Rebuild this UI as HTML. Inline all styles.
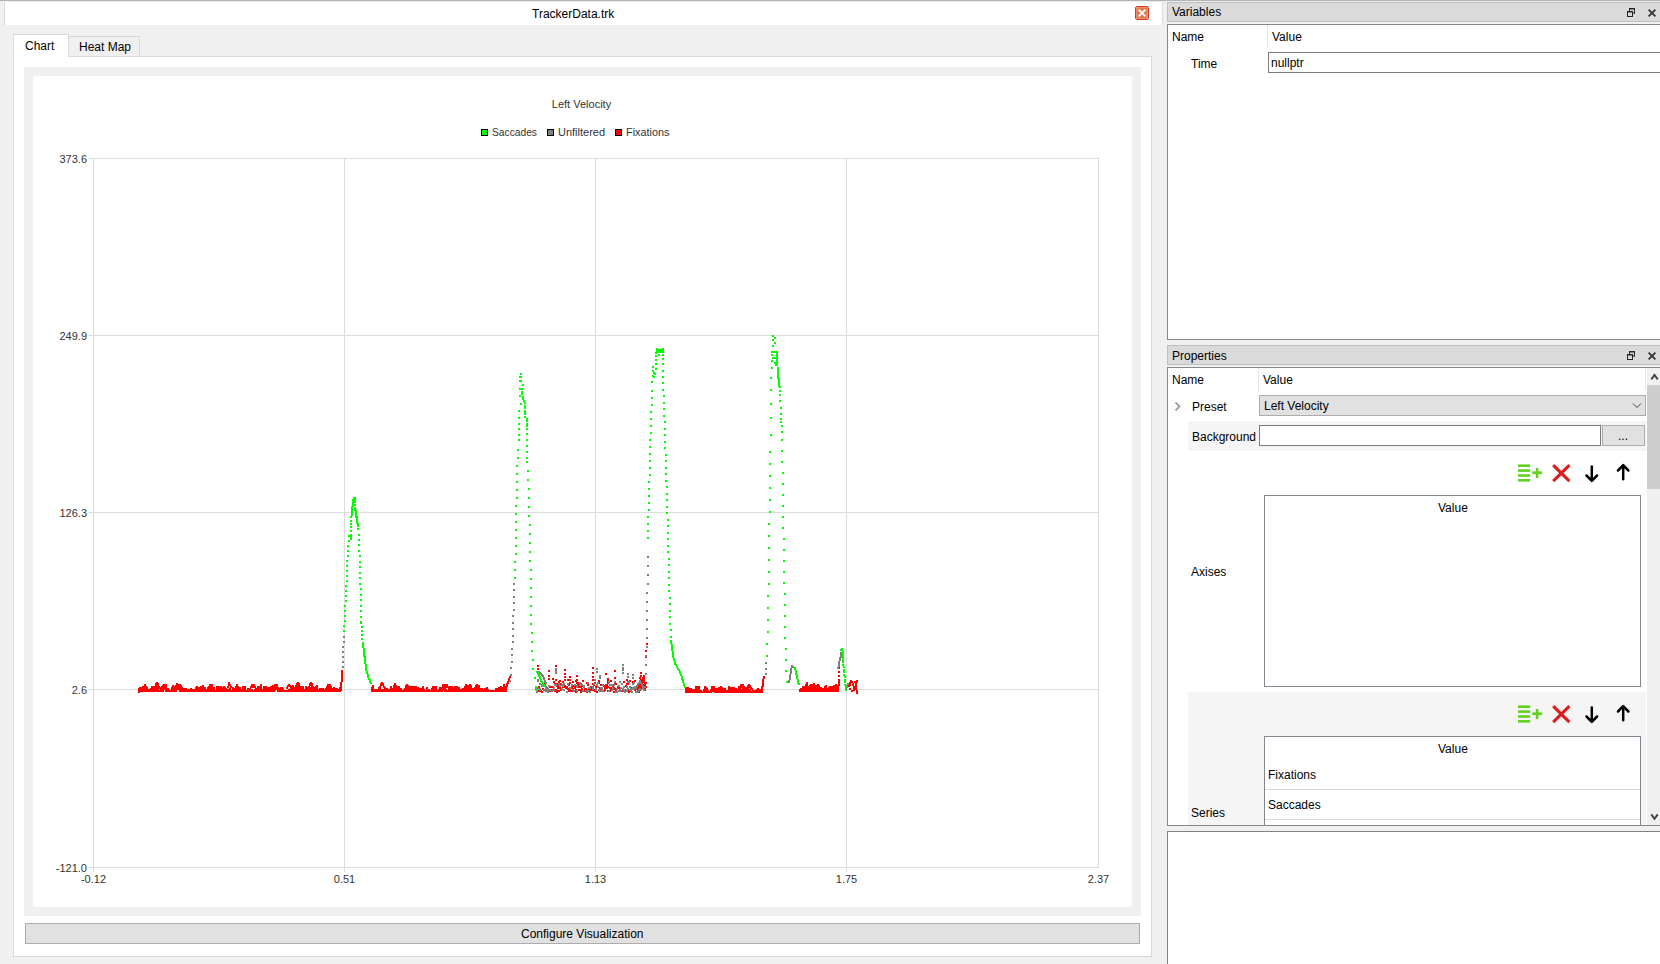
<!DOCTYPE html>
<html><head><meta charset="utf-8">
<style>
*{box-sizing:border-box;margin:0;padding:0}
html,body{width:1660px;height:964px;overflow:hidden;background:#f0f0f0;font-family:"Liberation Sans",sans-serif;font-size:12px;color:#000}
.a{position:absolute}
.t{position:absolute;white-space:nowrap;line-height:14px;font-size:12px}
.ct{position:absolute;white-space:nowrap;line-height:13px;font-size:11px;color:#333}
</style></head><body>
<!-- top line -->
<div class="a" style="left:0;top:0;width:1660px;height:1px;background:#b4b4b4"></div>
<div class="a" style="left:0;top:1px;width:1660px;height:1px;background:#ebebeb"></div>

<!-- left subwindow title bar -->
<div class="a" style="left:4px;top:2px;width:1159px;height:23px;background:#fff;border-left:1px solid #d9d9d9;border-right:1px solid #dcdcdc"></div>
<div class="t" style="left:532px;top:7px">TrackerData.trk</div>
<!-- close button -->
<svg class="a" style="left:1135px;top:6px" width="14" height="14" viewBox="0 0 14 14">
<path d="M1.5,0.5H12.5L13.5,1.5V12.5L12.5,13.5H1.5L0.5,12.5V1.5Z" fill="#e27a4c" stroke="#d8392a" stroke-width="1"/>
<rect x="1.5" y="1.5" width="11" height="11" fill="none" stroke="#eb9a78" stroke-width="0.8"/>
<path d="M4.3,4.3L9.7,9.7M9.7,4.3L4.3,9.7" stroke="#fff" stroke-width="1.9" stroke-linecap="square"/>
</svg>

<!-- tabs -->
<div class="a" style="left:68px;top:36px;width:72px;height:21px;background:#f0f0f0;border:1px solid #d9d9d9;border-bottom:none"></div>
<div class="t" style="left:79px;top:40px">Heat Map</div>
<!-- pane -->
<div class="a" style="left:13px;top:56px;width:1139px;height:901px;background:#fff;border:1px solid #d9d9d9"></div>
<div class="a" style="left:13px;top:34px;width:56px;height:23px;background:#fff;border:1px solid #d9d9d9;border-bottom:none"></div>
<div class="t" style="left:25px;top:39px">Chart</div>

<!-- chart frame -->
<div class="a" style="left:24px;top:67px;width:1117px;height:849px;background:#f0f0f0"></div>
<div class="a" style="left:33px;top:76px;width:1099px;height:831px;background:#fff;border-radius:3px"></div>
<svg class="a" style="left:0;top:0" width="1160" height="964" viewBox="0 0 1160 964" shape-rendering="crispEdges">
<rect x="89" y="158" width="1010" height="1" fill="#dcdcdc"/><rect x="89" y="335" width="1010" height="1" fill="#dcdcdc"/><rect x="89" y="512" width="1010" height="1" fill="#dcdcdc"/><rect x="89" y="689" width="1010" height="1" fill="#dcdcdc"/><rect x="89" y="867" width="1010" height="1" fill="#dcdcdc"/><rect x="93" y="158" width="1" height="714" fill="#dcdcdc"/><rect x="344" y="158" width="1" height="714" fill="#dcdcdc"/><rect x="595" y="158" width="1" height="714" fill="#dcdcdc"/><rect x="846" y="158" width="1" height="714" fill="#dcdcdc"/><rect x="1098" y="158" width="1" height="710" fill="#dcdcdc"/>
<g font-family="Liberation Sans, sans-serif" font-size="11" fill="#333" shape-rendering="auto">
<text x="87" y="162.5" text-anchor="end">373.6</text><text x="87" y="339.5" text-anchor="end">249.9</text><text x="87" y="516.5" text-anchor="end">126.3</text><text x="87" y="693.5" text-anchor="end">2.6</text><text x="87" y="871.5" text-anchor="end">-121.0</text><text x="93.5" y="883" text-anchor="middle">-0.12</text><text x="344.5" y="883" text-anchor="middle">0.51</text><text x="595.5" y="883" text-anchor="middle">1.13</text><text x="846.5" y="883" text-anchor="middle">1.75</text><text x="1098.5" y="883" text-anchor="middle">2.37</text>
<text x="581.5" y="108" text-anchor="middle">Left Velocity</text>
<text x="492" y="136" textLength="45" lengthAdjust="spacingAndGlyphs">Saccades</text>
<text x="558" y="136" textLength="47" lengthAdjust="spacingAndGlyphs">Unfiltered</text>
<text x="626" y="136" textLength="43.5" lengthAdjust="spacingAndGlyphs">Fixations</text>
</g>
<rect x="481.5" y="129.5" width="6" height="6" fill="#00ff00" stroke="#000"/>
<rect x="547.5" y="129.5" width="6" height="6" fill="#808080" stroke="#000"/>
<rect x="615.5" y="129.5" width="6" height="6" fill="#ff0000" stroke="#000"/>
<path fill="#ff0000" d="M138 688h2v2h-2zM138 690h2v2h-2zM138 690h2v2h-2zM139 689h2v2h-2zM139 690h2v2h-2zM139 690h2v2h-2zM139 687h2v2h-2zM139 689h2v2h-2zM139 690h2v2h-2zM140 687h2v2h-2zM140 689h2v2h-2zM140 690h2v2h-2zM141 689h2v2h-2zM141 690h2v2h-2zM141 690h2v2h-2zM141 689h2v2h-2zM141 690h2v2h-2zM141 690h2v2h-2zM142 686h2v2h-2zM142 688h2v2h-2zM142 690h2v2h-2zM143 688h2v2h-2zM143 690h2v2h-2zM143 690h2v2h-2zM144 686h2v2h-2zM144 688h2v2h-2zM144 690h2v2h-2zM144 684h2v2h-2zM144 686h2v2h-2zM144 688h2v2h-2zM145 686h2v2h-2zM145 688h2v2h-2zM145 690h2v2h-2zM146 687h2v2h-2zM146 689h2v2h-2zM146 690h2v2h-2zM146 688h2v2h-2zM146 690h2v2h-2zM146 690h2v2h-2zM147 689h2v2h-2zM147 690h2v2h-2zM147 690h2v2h-2zM148 689h2v2h-2zM148 690h2v2h-2zM148 690h2v2h-2zM148 690h2v2h-2zM148 690h2v2h-2zM148 690h2v2h-2zM149 689h2v2h-2zM149 690h2v2h-2zM149 690h2v2h-2zM150 688h2v2h-2zM150 690h2v2h-2zM150 690h2v2h-2zM151 687h2v2h-2zM151 689h2v2h-2zM151 690h2v2h-2zM151 686h2v2h-2zM151 688h2v2h-2zM151 690h2v2h-2zM152 686h2v2h-2zM152 688h2v2h-2zM152 690h2v2h-2zM153 687h2v2h-2zM153 689h2v2h-2zM153 690h2v2h-2zM153 688h2v2h-2zM153 690h2v2h-2zM153 690h2v2h-2zM154 690h2v2h-2zM154 690h2v2h-2zM154 690h2v2h-2zM155 689h2v2h-2zM155 690h2v2h-2zM155 690h2v2h-2zM155 687h2v2h-2zM155 689h2v2h-2zM155 690h2v2h-2zM156 685h2v2h-2zM156 687h2v2h-2zM156 689h2v2h-2zM157 688h2v2h-2zM157 690h2v2h-2zM157 690h2v2h-2zM158 690h2v2h-2zM158 690h2v2h-2zM158 690h2v2h-2zM158 690h2v2h-2zM158 690h2v2h-2zM158 690h2v2h-2zM159 690h2v2h-2zM159 690h2v2h-2zM159 690h2v2h-2zM160 688h2v2h-2zM160 690h2v2h-2zM160 690h2v2h-2zM160 687h2v2h-2zM160 689h2v2h-2zM160 690h2v2h-2zM161 686h2v2h-2zM161 688h2v2h-2zM161 690h2v2h-2zM162 685h2v2h-2zM162 687h2v2h-2zM162 689h2v2h-2zM162 687h2v2h-2zM162 689h2v2h-2zM162 690h2v2h-2zM163 684h2v2h-2zM163 686h2v2h-2zM163 688h2v2h-2zM164 684h2v2h-2zM164 686h2v2h-2zM164 688h2v2h-2zM165 684h2v2h-2zM165 686h2v2h-2zM165 688h2v2h-2zM165 687h2v2h-2zM165 689h2v2h-2zM165 690h2v2h-2zM166 688h2v2h-2zM166 690h2v2h-2zM166 690h2v2h-2zM167 688h2v2h-2zM167 690h2v2h-2zM167 690h2v2h-2zM167 689h2v2h-2zM167 690h2v2h-2zM167 690h2v2h-2zM168 689h2v2h-2zM168 690h2v2h-2zM168 690h2v2h-2zM169 690h2v2h-2zM169 690h2v2h-2zM169 690h2v2h-2zM169 690h2v2h-2zM169 690h2v2h-2zM169 690h2v2h-2zM170 690h2v2h-2zM170 690h2v2h-2zM170 690h2v2h-2zM171 687h2v2h-2zM171 689h2v2h-2zM171 690h2v2h-2zM172 685h2v2h-2zM172 687h2v2h-2zM172 689h2v2h-2zM172 689h2v2h-2zM172 690h2v2h-2zM172 690h2v2h-2zM173 689h2v2h-2zM173 690h2v2h-2zM173 690h2v2h-2zM174 690h2v2h-2zM174 690h2v2h-2zM174 690h2v2h-2zM174 688h2v2h-2zM174 690h2v2h-2zM174 690h2v2h-2zM174 686h2v2h-2zM175 685h2v2h-2zM176 683h2v2h-2zM177 685h2v2h-2zM178 686h2v2h-2zM175 687h2v2h-2zM175 689h2v2h-2zM175 690h2v2h-2zM176 684h2v2h-2zM176 686h2v2h-2zM176 688h2v2h-2zM176 684h2v2h-2zM176 686h2v2h-2zM176 688h2v2h-2zM177 684h2v2h-2zM177 686h2v2h-2zM177 688h2v2h-2zM178 684h2v2h-2zM178 686h2v2h-2zM178 688h2v2h-2zM179 687h2v2h-2zM179 689h2v2h-2zM179 690h2v2h-2zM179 684h2v2h-2zM179 686h2v2h-2zM179 688h2v2h-2zM180 685h2v2h-2zM180 687h2v2h-2zM180 689h2v2h-2zM181 687h2v2h-2zM181 689h2v2h-2zM181 690h2v2h-2zM181 688h2v2h-2zM181 690h2v2h-2zM181 690h2v2h-2zM182 689h2v2h-2zM182 690h2v2h-2zM182 690h2v2h-2zM183 688h2v2h-2zM183 690h2v2h-2zM183 690h2v2h-2zM183 688h2v2h-2zM183 690h2v2h-2zM183 690h2v2h-2zM184 688h2v2h-2zM184 690h2v2h-2zM184 690h2v2h-2zM185 688h2v2h-2zM185 690h2v2h-2zM185 690h2v2h-2zM186 689h2v2h-2zM186 690h2v2h-2zM186 690h2v2h-2zM186 689h2v2h-2zM186 690h2v2h-2zM186 690h2v2h-2zM187 690h2v2h-2zM187 690h2v2h-2zM187 690h2v2h-2zM188 690h2v2h-2zM188 690h2v2h-2zM188 690h2v2h-2zM188 689h2v2h-2zM188 690h2v2h-2zM188 690h2v2h-2zM189 689h2v2h-2zM189 690h2v2h-2zM189 690h2v2h-2zM190 688h2v2h-2zM190 690h2v2h-2zM190 690h2v2h-2zM190 690h2v2h-2zM190 690h2v2h-2zM190 690h2v2h-2zM191 690h2v2h-2zM191 690h2v2h-2zM191 690h2v2h-2zM192 689h2v2h-2zM192 690h2v2h-2zM192 690h2v2h-2zM193 690h2v2h-2zM193 690h2v2h-2zM193 690h2v2h-2zM193 690h2v2h-2zM193 690h2v2h-2zM193 690h2v2h-2zM194 689h2v2h-2zM194 690h2v2h-2zM194 690h2v2h-2zM195 687h2v2h-2zM195 689h2v2h-2zM195 690h2v2h-2zM195 688h2v2h-2zM195 690h2v2h-2zM195 690h2v2h-2zM196 686h2v2h-2zM196 688h2v2h-2zM196 690h2v2h-2zM197 687h2v2h-2zM197 689h2v2h-2zM197 690h2v2h-2zM197 690h2v2h-2zM197 690h2v2h-2zM197 690h2v2h-2zM198 690h2v2h-2zM198 690h2v2h-2zM198 690h2v2h-2zM199 687h2v2h-2zM199 689h2v2h-2zM199 690h2v2h-2zM200 686h2v2h-2zM200 688h2v2h-2zM200 690h2v2h-2zM200 687h2v2h-2zM200 689h2v2h-2zM200 690h2v2h-2zM201 687h2v2h-2zM201 689h2v2h-2zM201 690h2v2h-2zM202 689h2v2h-2zM202 690h2v2h-2zM202 690h2v2h-2zM202 685h2v2h-2zM202 687h2v2h-2zM202 689h2v2h-2zM203 688h2v2h-2zM203 690h2v2h-2zM203 690h2v2h-2zM204 687h2v2h-2zM204 689h2v2h-2zM204 690h2v2h-2zM204 688h2v2h-2zM204 690h2v2h-2zM204 690h2v2h-2zM205 689h2v2h-2zM205 690h2v2h-2zM205 690h2v2h-2zM206 690h2v2h-2zM206 690h2v2h-2zM206 690h2v2h-2zM207 687h2v2h-2zM207 689h2v2h-2zM207 690h2v2h-2zM207 688h2v2h-2zM207 690h2v2h-2zM207 690h2v2h-2zM208 686h2v2h-2zM208 688h2v2h-2zM208 690h2v2h-2zM209 684h2v2h-2zM209 686h2v2h-2zM209 688h2v2h-2zM209 685h2v2h-2zM209 687h2v2h-2zM209 689h2v2h-2zM210 686h2v2h-2zM210 688h2v2h-2zM210 690h2v2h-2zM211 688h2v2h-2zM211 690h2v2h-2zM211 690h2v2h-2zM211 684h2v2h-2zM211 686h2v2h-2zM211 688h2v2h-2zM212 688h2v2h-2zM212 690h2v2h-2zM212 690h2v2h-2zM213 687h2v2h-2zM213 689h2v2h-2zM213 690h2v2h-2zM214 690h2v2h-2zM214 690h2v2h-2zM214 690h2v2h-2zM214 690h2v2h-2zM214 690h2v2h-2zM214 690h2v2h-2zM215 690h2v2h-2zM215 690h2v2h-2zM215 690h2v2h-2zM216 686h2v2h-2zM216 688h2v2h-2zM216 690h2v2h-2zM216 686h2v2h-2zM216 688h2v2h-2zM216 690h2v2h-2zM217 687h2v2h-2zM217 689h2v2h-2zM217 690h2v2h-2zM218 686h2v2h-2zM218 688h2v2h-2zM218 690h2v2h-2zM218 686h2v2h-2zM218 688h2v2h-2zM218 690h2v2h-2zM219 689h2v2h-2zM219 690h2v2h-2zM219 690h2v2h-2zM220 686h2v2h-2zM220 688h2v2h-2zM220 690h2v2h-2zM221 687h2v2h-2zM221 689h2v2h-2zM221 690h2v2h-2zM221 688h2v2h-2zM221 690h2v2h-2zM221 690h2v2h-2zM222 688h2v2h-2zM222 690h2v2h-2zM222 690h2v2h-2zM223 688h2v2h-2zM223 690h2v2h-2zM223 690h2v2h-2zM223 686h2v2h-2zM223 688h2v2h-2zM223 690h2v2h-2zM224 687h2v2h-2zM224 689h2v2h-2zM224 690h2v2h-2zM225 689h2v2h-2zM225 690h2v2h-2zM225 690h2v2h-2zM225 688h2v2h-2zM225 690h2v2h-2zM225 690h2v2h-2zM226 690h2v2h-2zM226 690h2v2h-2zM226 690h2v2h-2zM227 689h2v2h-2zM227 690h2v2h-2zM227 690h2v2h-2zM227 686h2v2h-2zM228 684h2v2h-2zM228 682h2v2h-2zM229 684h2v2h-2zM230 686h2v2h-2zM228 689h2v2h-2zM228 690h2v2h-2zM228 690h2v2h-2zM228 690h2v2h-2zM228 690h2v2h-2zM228 690h2v2h-2zM229 688h2v2h-2zM229 690h2v2h-2zM229 690h2v2h-2zM230 690h2v2h-2zM230 690h2v2h-2zM230 690h2v2h-2zM230 690h2v2h-2zM230 690h2v2h-2zM230 690h2v2h-2zM231 690h2v2h-2zM231 690h2v2h-2zM231 690h2v2h-2zM232 690h2v2h-2zM232 690h2v2h-2zM232 690h2v2h-2zM232 687h2v2h-2zM232 689h2v2h-2zM232 690h2v2h-2zM233 689h2v2h-2zM233 690h2v2h-2zM233 690h2v2h-2zM234 688h2v2h-2zM234 690h2v2h-2zM234 690h2v2h-2zM235 686h2v2h-2zM235 688h2v2h-2zM235 690h2v2h-2zM235 686h2v2h-2zM235 688h2v2h-2zM235 690h2v2h-2zM236 684h2v2h-2zM236 686h2v2h-2zM236 688h2v2h-2zM237 686h2v2h-2zM237 688h2v2h-2zM237 690h2v2h-2zM237 688h2v2h-2zM237 690h2v2h-2zM237 690h2v2h-2zM238 688h2v2h-2zM238 690h2v2h-2zM238 690h2v2h-2zM239 688h2v2h-2zM239 690h2v2h-2zM239 690h2v2h-2zM239 687h2v2h-2zM239 689h2v2h-2zM239 690h2v2h-2zM240 689h2v2h-2zM240 690h2v2h-2zM240 690h2v2h-2zM241 689h2v2h-2zM241 690h2v2h-2zM241 690h2v2h-2zM242 689h2v2h-2zM242 690h2v2h-2zM242 690h2v2h-2zM242 686h2v2h-2zM242 688h2v2h-2zM242 690h2v2h-2zM243 686h2v2h-2zM243 688h2v2h-2zM243 690h2v2h-2zM244 686h2v2h-2zM244 688h2v2h-2zM244 690h2v2h-2zM244 688h2v2h-2zM244 690h2v2h-2zM244 690h2v2h-2zM245 690h2v2h-2zM245 690h2v2h-2zM245 690h2v2h-2zM246 690h2v2h-2zM246 690h2v2h-2zM246 690h2v2h-2zM246 690h2v2h-2zM246 690h2v2h-2zM246 690h2v2h-2zM247 688h2v2h-2zM247 690h2v2h-2zM247 690h2v2h-2zM248 688h2v2h-2zM248 690h2v2h-2zM248 690h2v2h-2zM249 688h2v2h-2zM249 690h2v2h-2zM249 690h2v2h-2zM249 688h2v2h-2zM249 690h2v2h-2zM249 690h2v2h-2zM250 689h2v2h-2zM250 690h2v2h-2zM250 690h2v2h-2zM251 689h2v2h-2zM251 690h2v2h-2zM251 690h2v2h-2zM251 690h2v2h-2zM251 690h2v2h-2zM251 690h2v2h-2zM252 690h2v2h-2zM252 690h2v2h-2zM252 690h2v2h-2zM253 690h2v2h-2zM253 690h2v2h-2zM253 690h2v2h-2zM253 690h2v2h-2zM253 690h2v2h-2zM253 690h2v2h-2zM254 689h2v2h-2zM254 690h2v2h-2zM254 690h2v2h-2zM255 689h2v2h-2zM255 690h2v2h-2zM255 690h2v2h-2zM256 689h2v2h-2zM256 690h2v2h-2zM256 690h2v2h-2zM256 688h2v2h-2zM256 690h2v2h-2zM256 690h2v2h-2zM257 686h2v2h-2zM257 688h2v2h-2zM257 690h2v2h-2zM258 686h2v2h-2zM258 688h2v2h-2zM258 690h2v2h-2zM258 686h2v2h-2zM258 688h2v2h-2zM258 690h2v2h-2zM259 686h2v2h-2zM259 688h2v2h-2zM259 690h2v2h-2zM260 685h2v2h-2zM260 687h2v2h-2zM260 689h2v2h-2zM260 684h2v2h-2zM260 686h2v2h-2zM260 688h2v2h-2zM261 689h2v2h-2zM261 690h2v2h-2zM261 690h2v2h-2zM262 690h2v2h-2zM262 690h2v2h-2zM262 690h2v2h-2zM263 686h2v2h-2zM263 688h2v2h-2zM263 690h2v2h-2zM263 686h2v2h-2zM263 688h2v2h-2zM263 690h2v2h-2zM264 686h2v2h-2zM264 688h2v2h-2zM264 690h2v2h-2zM265 686h2v2h-2zM265 688h2v2h-2zM265 690h2v2h-2zM265 688h2v2h-2zM265 690h2v2h-2zM265 690h2v2h-2zM266 688h2v2h-2zM266 690h2v2h-2zM266 690h2v2h-2zM267 688h2v2h-2zM267 690h2v2h-2zM267 690h2v2h-2zM267 687h2v2h-2zM267 689h2v2h-2zM267 690h2v2h-2zM268 687h2v2h-2zM268 689h2v2h-2zM268 690h2v2h-2zM269 688h2v2h-2zM269 690h2v2h-2zM269 690h2v2h-2zM270 688h2v2h-2zM270 690h2v2h-2zM270 690h2v2h-2zM270 686h2v2h-2zM270 688h2v2h-2zM270 690h2v2h-2zM271 688h2v2h-2zM271 690h2v2h-2zM271 690h2v2h-2zM272 687h2v2h-2zM272 689h2v2h-2zM272 690h2v2h-2zM272 685h2v2h-2zM272 687h2v2h-2zM272 689h2v2h-2zM273 686h2v2h-2zM273 688h2v2h-2zM273 690h2v2h-2zM274 685h2v2h-2zM274 687h2v2h-2zM274 689h2v2h-2zM274 684h2v2h-2zM274 686h2v2h-2zM274 688h2v2h-2zM275 684h2v2h-2zM275 686h2v2h-2zM275 688h2v2h-2zM276 684h2v2h-2zM276 686h2v2h-2zM276 688h2v2h-2zM277 687h2v2h-2zM277 689h2v2h-2zM277 690h2v2h-2zM277 687h2v2h-2zM277 689h2v2h-2zM277 690h2v2h-2zM278 688h2v2h-2zM278 690h2v2h-2zM278 690h2v2h-2zM279 689h2v2h-2zM279 690h2v2h-2zM279 690h2v2h-2zM279 690h2v2h-2zM279 690h2v2h-2zM279 690h2v2h-2zM280 687h2v2h-2zM280 689h2v2h-2zM280 690h2v2h-2zM281 687h2v2h-2zM281 689h2v2h-2zM281 690h2v2h-2zM281 689h2v2h-2zM281 690h2v2h-2zM281 690h2v2h-2zM282 688h2v2h-2zM282 690h2v2h-2zM282 690h2v2h-2zM283 690h2v2h-2zM283 690h2v2h-2zM283 690h2v2h-2zM284 690h2v2h-2zM284 690h2v2h-2zM284 690h2v2h-2zM284 690h2v2h-2zM284 690h2v2h-2zM284 690h2v2h-2zM285 690h2v2h-2zM285 690h2v2h-2zM285 690h2v2h-2zM286 690h2v2h-2zM286 690h2v2h-2zM286 690h2v2h-2zM286 690h2v2h-2zM286 690h2v2h-2zM286 690h2v2h-2zM286 687h2v2h-2zM287 685h2v2h-2zM288 684h2v2h-2zM289 685h2v2h-2zM290 687h2v2h-2zM287 690h2v2h-2zM287 690h2v2h-2zM287 690h2v2h-2zM288 689h2v2h-2zM288 690h2v2h-2zM288 690h2v2h-2zM288 689h2v2h-2zM288 690h2v2h-2zM288 690h2v2h-2zM289 689h2v2h-2zM289 690h2v2h-2zM289 690h2v2h-2zM290 690h2v2h-2zM290 690h2v2h-2zM290 690h2v2h-2zM291 688h2v2h-2zM291 690h2v2h-2zM291 690h2v2h-2zM291 686h2v2h-2zM291 688h2v2h-2zM291 690h2v2h-2zM292 685h2v2h-2zM292 687h2v2h-2zM292 689h2v2h-2zM293 690h2v2h-2zM293 690h2v2h-2zM293 690h2v2h-2zM293 689h2v2h-2zM293 690h2v2h-2zM293 690h2v2h-2zM294 688h2v2h-2zM294 690h2v2h-2zM294 690h2v2h-2zM295 686h2v2h-2zM295 688h2v2h-2zM295 690h2v2h-2zM295 685h2v2h-2zM295 687h2v2h-2zM295 689h2v2h-2zM296 685h2v2h-2zM296 687h2v2h-2zM296 689h2v2h-2zM297 686h2v2h-2zM297 688h2v2h-2zM297 690h2v2h-2zM298 688h2v2h-2zM298 690h2v2h-2zM298 690h2v2h-2zM298 686h2v2h-2zM298 688h2v2h-2zM298 690h2v2h-2zM299 687h2v2h-2zM299 689h2v2h-2zM299 690h2v2h-2zM300 686h2v2h-2zM300 688h2v2h-2zM300 690h2v2h-2zM300 687h2v2h-2zM300 689h2v2h-2zM300 690h2v2h-2zM301 688h2v2h-2zM301 690h2v2h-2zM301 690h2v2h-2zM302 686h2v2h-2zM302 688h2v2h-2zM302 690h2v2h-2zM302 686h2v2h-2zM302 688h2v2h-2zM302 690h2v2h-2zM303 689h2v2h-2zM303 690h2v2h-2zM303 690h2v2h-2zM304 689h2v2h-2zM304 690h2v2h-2zM304 690h2v2h-2zM305 686h2v2h-2zM305 688h2v2h-2zM305 690h2v2h-2zM305 687h2v2h-2zM305 689h2v2h-2zM305 690h2v2h-2zM306 687h2v2h-2zM306 689h2v2h-2zM306 690h2v2h-2zM307 688h2v2h-2zM307 690h2v2h-2zM307 690h2v2h-2zM307 689h2v2h-2zM307 690h2v2h-2zM307 690h2v2h-2zM308 690h2v2h-2zM308 690h2v2h-2zM308 690h2v2h-2zM309 688h2v2h-2zM309 690h2v2h-2zM309 690h2v2h-2zM309 689h2v2h-2zM309 690h2v2h-2zM309 690h2v2h-2zM310 687h2v2h-2zM310 689h2v2h-2zM310 690h2v2h-2zM311 686h2v2h-2zM311 688h2v2h-2zM311 690h2v2h-2zM312 687h2v2h-2zM312 689h2v2h-2zM312 690h2v2h-2zM312 690h2v2h-2zM312 690h2v2h-2zM312 690h2v2h-2zM313 690h2v2h-2zM313 690h2v2h-2zM313 690h2v2h-2zM314 689h2v2h-2zM314 690h2v2h-2zM314 690h2v2h-2zM314 688h2v2h-2zM314 690h2v2h-2zM314 690h2v2h-2zM315 686h2v2h-2zM315 688h2v2h-2zM315 690h2v2h-2zM316 685h2v2h-2zM316 687h2v2h-2zM316 689h2v2h-2zM316 687h2v2h-2zM316 689h2v2h-2zM316 690h2v2h-2zM317 689h2v2h-2zM317 690h2v2h-2zM317 690h2v2h-2zM318 690h2v2h-2zM318 690h2v2h-2zM318 690h2v2h-2zM319 688h2v2h-2zM319 690h2v2h-2zM319 690h2v2h-2zM319 689h2v2h-2zM319 690h2v2h-2zM319 690h2v2h-2zM320 688h2v2h-2zM320 690h2v2h-2zM320 690h2v2h-2zM321 689h2v2h-2zM321 690h2v2h-2zM321 690h2v2h-2zM321 688h2v2h-2zM321 690h2v2h-2zM321 690h2v2h-2zM322 688h2v2h-2zM322 690h2v2h-2zM322 690h2v2h-2zM323 690h2v2h-2zM323 690h2v2h-2zM323 690h2v2h-2zM323 690h2v2h-2zM323 690h2v2h-2zM323 690h2v2h-2zM324 689h2v2h-2zM324 690h2v2h-2zM324 690h2v2h-2zM325 688h2v2h-2zM325 690h2v2h-2zM325 690h2v2h-2zM326 688h2v2h-2zM326 690h2v2h-2zM326 690h2v2h-2zM326 688h2v2h-2zM326 690h2v2h-2zM326 690h2v2h-2zM327 688h2v2h-2zM327 690h2v2h-2zM327 690h2v2h-2zM328 689h2v2h-2zM328 690h2v2h-2zM328 690h2v2h-2zM328 688h2v2h-2zM328 690h2v2h-2zM328 690h2v2h-2zM329 688h2v2h-2zM329 690h2v2h-2zM329 690h2v2h-2zM330 690h2v2h-2zM330 690h2v2h-2zM330 690h2v2h-2zM330 690h2v2h-2zM330 690h2v2h-2zM330 690h2v2h-2zM331 690h2v2h-2zM331 690h2v2h-2zM331 690h2v2h-2zM332 690h2v2h-2zM332 690h2v2h-2zM332 690h2v2h-2zM333 688h2v2h-2zM333 690h2v2h-2zM333 690h2v2h-2zM333 687h2v2h-2zM333 689h2v2h-2zM333 690h2v2h-2zM334 688h2v2h-2zM334 690h2v2h-2zM334 690h2v2h-2zM335 688h2v2h-2zM335 690h2v2h-2zM335 690h2v2h-2zM335 689h2v2h-2zM335 690h2v2h-2zM335 690h2v2h-2zM336 688h2v2h-2zM336 690h2v2h-2zM336 690h2v2h-2zM337 689h2v2h-2zM337 690h2v2h-2zM337 690h2v2h-2zM337 690h2v2h-2zM337 690h2v2h-2zM337 690h2v2h-2zM338 690h2v2h-2zM338 690h2v2h-2zM338 690h2v2h-2zM339 687h2v2h-2zM339 689h2v2h-2zM339 690h2v2h-2zM340 685h2v2h-2zM340 687h2v2h-2zM340 689h2v2h-2zM371 687h2v2h-2zM371 689h2v2h-2zM371 690h2v2h-2zM372 685h2v2h-2zM372 687h2v2h-2zM372 689h2v2h-2zM372 687h2v2h-2zM372 689h2v2h-2zM372 690h2v2h-2zM373 690h2v2h-2zM373 690h2v2h-2zM373 690h2v2h-2zM374 690h2v2h-2zM374 690h2v2h-2zM374 690h2v2h-2zM374 689h2v2h-2zM374 690h2v2h-2zM374 690h2v2h-2zM375 689h2v2h-2zM375 690h2v2h-2zM375 690h2v2h-2zM376 689h2v2h-2zM376 690h2v2h-2zM376 690h2v2h-2zM377 690h2v2h-2zM377 690h2v2h-2zM377 690h2v2h-2zM377 689h2v2h-2zM377 690h2v2h-2zM377 690h2v2h-2zM378 689h2v2h-2zM378 690h2v2h-2zM378 690h2v2h-2zM379 690h2v2h-2zM379 690h2v2h-2zM379 690h2v2h-2zM379 688h2v2h-2zM379 690h2v2h-2zM379 690h2v2h-2zM380 690h2v2h-2zM380 690h2v2h-2zM380 690h2v2h-2zM381 689h2v2h-2zM381 690h2v2h-2zM381 690h2v2h-2zM381 690h2v2h-2zM381 690h2v2h-2zM381 690h2v2h-2zM382 690h2v2h-2zM382 690h2v2h-2zM382 690h2v2h-2zM383 689h2v2h-2zM383 690h2v2h-2zM383 690h2v2h-2zM384 690h2v2h-2zM384 690h2v2h-2zM384 690h2v2h-2zM384 688h2v2h-2zM384 690h2v2h-2zM384 690h2v2h-2zM385 689h2v2h-2zM385 690h2v2h-2zM385 690h2v2h-2zM386 688h2v2h-2zM386 690h2v2h-2zM386 690h2v2h-2zM386 689h2v2h-2zM386 690h2v2h-2zM386 690h2v2h-2zM387 690h2v2h-2zM387 690h2v2h-2zM387 690h2v2h-2zM388 690h2v2h-2zM388 690h2v2h-2zM388 690h2v2h-2zM388 689h2v2h-2zM388 690h2v2h-2zM388 690h2v2h-2zM389 690h2v2h-2zM389 690h2v2h-2zM389 690h2v2h-2zM390 686h2v2h-2zM390 688h2v2h-2zM390 690h2v2h-2zM391 688h2v2h-2zM391 690h2v2h-2zM391 690h2v2h-2zM391 688h2v2h-2zM391 690h2v2h-2zM391 690h2v2h-2zM392 688h2v2h-2zM392 690h2v2h-2zM392 690h2v2h-2zM393 686h2v2h-2zM393 688h2v2h-2zM393 690h2v2h-2zM393 686h2v2h-2zM393 685h2v2h-2zM394 683h2v2h-2zM395 685h2v2h-2zM396 686h2v2h-2zM393 687h2v2h-2zM393 689h2v2h-2zM393 690h2v2h-2zM394 689h2v2h-2zM394 690h2v2h-2zM394 690h2v2h-2zM395 686h2v2h-2zM395 688h2v2h-2zM395 690h2v2h-2zM395 688h2v2h-2zM395 690h2v2h-2zM395 690h2v2h-2zM396 688h2v2h-2zM396 690h2v2h-2zM396 690h2v2h-2zM397 690h2v2h-2zM397 690h2v2h-2zM397 690h2v2h-2zM398 688h2v2h-2zM398 690h2v2h-2zM398 690h2v2h-2zM398 686h2v2h-2zM398 688h2v2h-2zM398 690h2v2h-2zM399 688h2v2h-2zM399 690h2v2h-2zM399 690h2v2h-2zM400 688h2v2h-2zM400 690h2v2h-2zM400 690h2v2h-2zM400 690h2v2h-2zM400 690h2v2h-2zM400 690h2v2h-2zM401 690h2v2h-2zM401 690h2v2h-2zM401 690h2v2h-2zM402 690h2v2h-2zM402 690h2v2h-2zM402 690h2v2h-2zM402 690h2v2h-2zM402 690h2v2h-2zM402 690h2v2h-2zM403 689h2v2h-2zM403 690h2v2h-2zM403 690h2v2h-2zM404 688h2v2h-2zM404 690h2v2h-2zM404 690h2v2h-2zM405 689h2v2h-2zM405 690h2v2h-2zM405 690h2v2h-2zM405 687h2v2h-2zM405 685h2v2h-2zM406 684h2v2h-2zM407 685h2v2h-2zM408 687h2v2h-2zM405 685h2v2h-2zM405 687h2v2h-2zM405 689h2v2h-2zM406 687h2v2h-2zM406 689h2v2h-2zM406 690h2v2h-2zM407 686h2v2h-2zM407 688h2v2h-2zM407 690h2v2h-2zM407 687h2v2h-2zM407 689h2v2h-2zM407 690h2v2h-2zM408 687h2v2h-2zM408 689h2v2h-2zM408 690h2v2h-2zM409 686h2v2h-2zM409 688h2v2h-2zM409 690h2v2h-2zM409 686h2v2h-2zM409 688h2v2h-2zM409 690h2v2h-2zM410 686h2v2h-2zM410 688h2v2h-2zM410 690h2v2h-2zM411 688h2v2h-2zM411 690h2v2h-2zM411 690h2v2h-2zM412 687h2v2h-2zM412 689h2v2h-2zM412 690h2v2h-2zM412 686h2v2h-2zM412 688h2v2h-2zM412 690h2v2h-2zM413 688h2v2h-2zM413 690h2v2h-2zM413 690h2v2h-2zM414 688h2v2h-2zM414 690h2v2h-2zM414 690h2v2h-2zM414 686h2v2h-2zM414 688h2v2h-2zM414 690h2v2h-2zM415 686h2v2h-2zM415 688h2v2h-2zM415 690h2v2h-2zM416 689h2v2h-2zM416 690h2v2h-2zM416 690h2v2h-2zM416 689h2v2h-2zM416 690h2v2h-2zM416 690h2v2h-2zM417 687h2v2h-2zM417 689h2v2h-2zM417 690h2v2h-2zM418 688h2v2h-2zM418 690h2v2h-2zM418 690h2v2h-2zM419 689h2v2h-2zM419 690h2v2h-2zM419 690h2v2h-2zM419 689h2v2h-2zM419 690h2v2h-2zM419 690h2v2h-2zM420 688h2v2h-2zM420 690h2v2h-2zM420 690h2v2h-2zM421 689h2v2h-2zM421 690h2v2h-2zM421 690h2v2h-2zM421 688h2v2h-2zM421 690h2v2h-2zM421 690h2v2h-2zM422 686h2v2h-2zM422 688h2v2h-2zM422 690h2v2h-2zM423 689h2v2h-2zM423 690h2v2h-2zM423 690h2v2h-2zM423 690h2v2h-2zM423 690h2v2h-2zM423 690h2v2h-2zM424 690h2v2h-2zM424 690h2v2h-2zM424 690h2v2h-2zM425 690h2v2h-2zM425 690h2v2h-2zM425 690h2v2h-2zM426 689h2v2h-2zM426 690h2v2h-2zM426 690h2v2h-2zM426 687h2v2h-2zM426 689h2v2h-2zM426 690h2v2h-2zM427 689h2v2h-2zM427 690h2v2h-2zM427 690h2v2h-2zM428 690h2v2h-2zM428 690h2v2h-2zM428 690h2v2h-2zM428 689h2v2h-2zM428 690h2v2h-2zM428 690h2v2h-2zM429 690h2v2h-2zM429 690h2v2h-2zM429 690h2v2h-2zM430 690h2v2h-2zM430 690h2v2h-2zM430 690h2v2h-2zM430 690h2v2h-2zM430 690h2v2h-2zM430 690h2v2h-2zM431 688h2v2h-2zM431 690h2v2h-2zM431 690h2v2h-2zM432 686h2v2h-2zM432 688h2v2h-2zM432 690h2v2h-2zM433 687h2v2h-2zM433 689h2v2h-2zM433 690h2v2h-2zM433 686h2v2h-2zM433 688h2v2h-2zM433 690h2v2h-2zM434 689h2v2h-2zM434 690h2v2h-2zM434 690h2v2h-2zM435 690h2v2h-2zM435 690h2v2h-2zM435 690h2v2h-2zM435 686h2v2h-2zM435 688h2v2h-2zM435 690h2v2h-2zM436 690h2v2h-2zM436 690h2v2h-2zM436 690h2v2h-2zM437 690h2v2h-2zM437 690h2v2h-2zM437 690h2v2h-2zM437 690h2v2h-2zM437 690h2v2h-2zM437 690h2v2h-2zM438 689h2v2h-2zM438 690h2v2h-2zM438 690h2v2h-2zM439 687h2v2h-2zM439 689h2v2h-2zM439 690h2v2h-2zM440 687h2v2h-2zM440 689h2v2h-2zM440 690h2v2h-2zM440 687h2v2h-2zM440 689h2v2h-2zM440 690h2v2h-2zM441 688h2v2h-2zM441 690h2v2h-2zM441 690h2v2h-2zM442 685h2v2h-2zM442 687h2v2h-2zM442 689h2v2h-2zM442 684h2v2h-2zM442 686h2v2h-2zM442 688h2v2h-2zM443 684h2v2h-2zM443 686h2v2h-2zM443 688h2v2h-2zM444 685h2v2h-2zM444 687h2v2h-2zM444 689h2v2h-2zM444 687h2v2h-2zM444 689h2v2h-2zM444 690h2v2h-2zM445 689h2v2h-2zM445 690h2v2h-2zM445 690h2v2h-2zM446 690h2v2h-2zM446 690h2v2h-2zM446 690h2v2h-2zM447 690h2v2h-2zM447 690h2v2h-2zM447 690h2v2h-2zM447 690h2v2h-2zM447 690h2v2h-2zM447 690h2v2h-2zM448 687h2v2h-2zM448 689h2v2h-2zM448 690h2v2h-2zM449 686h2v2h-2zM449 688h2v2h-2zM449 690h2v2h-2zM449 689h2v2h-2zM449 690h2v2h-2zM449 690h2v2h-2zM450 688h2v2h-2zM450 690h2v2h-2zM450 690h2v2h-2zM451 687h2v2h-2zM451 689h2v2h-2zM451 690h2v2h-2zM451 686h2v2h-2zM451 688h2v2h-2zM451 690h2v2h-2zM452 687h2v2h-2zM452 689h2v2h-2zM452 690h2v2h-2zM453 688h2v2h-2zM453 690h2v2h-2zM453 690h2v2h-2zM454 688h2v2h-2zM454 690h2v2h-2zM454 690h2v2h-2zM454 686h2v2h-2zM454 688h2v2h-2zM454 690h2v2h-2zM455 687h2v2h-2zM455 689h2v2h-2zM455 690h2v2h-2zM456 686h2v2h-2zM456 688h2v2h-2zM456 690h2v2h-2zM456 688h2v2h-2zM456 690h2v2h-2zM456 690h2v2h-2zM457 689h2v2h-2zM457 690h2v2h-2zM457 690h2v2h-2zM458 687h2v2h-2zM458 689h2v2h-2zM458 690h2v2h-2zM458 687h2v2h-2zM458 689h2v2h-2zM458 690h2v2h-2zM459 689h2v2h-2zM459 690h2v2h-2zM459 690h2v2h-2zM460 689h2v2h-2zM460 690h2v2h-2zM460 690h2v2h-2zM461 690h2v2h-2zM461 690h2v2h-2zM461 690h2v2h-2zM461 690h2v2h-2zM461 690h2v2h-2zM461 690h2v2h-2zM462 688h2v2h-2zM462 690h2v2h-2zM462 690h2v2h-2zM463 690h2v2h-2zM463 690h2v2h-2zM463 690h2v2h-2zM463 689h2v2h-2zM463 690h2v2h-2zM463 690h2v2h-2zM464 686h2v2h-2zM464 688h2v2h-2zM464 690h2v2h-2zM465 684h2v2h-2zM465 686h2v2h-2zM465 688h2v2h-2zM465 686h2v2h-2zM465 688h2v2h-2zM465 690h2v2h-2zM466 685h2v2h-2zM466 687h2v2h-2zM466 689h2v2h-2zM467 686h2v2h-2zM467 688h2v2h-2zM467 690h2v2h-2zM468 688h2v2h-2zM468 690h2v2h-2zM468 690h2v2h-2zM468 685h2v2h-2zM468 687h2v2h-2zM468 689h2v2h-2zM469 684h2v2h-2zM469 686h2v2h-2zM469 688h2v2h-2zM470 685h2v2h-2zM470 687h2v2h-2zM470 689h2v2h-2zM470 687h2v2h-2zM470 689h2v2h-2zM470 690h2v2h-2zM471 689h2v2h-2zM471 690h2v2h-2zM471 690h2v2h-2zM472 690h2v2h-2zM472 690h2v2h-2zM472 690h2v2h-2zM472 688h2v2h-2zM472 690h2v2h-2zM472 690h2v2h-2zM473 689h2v2h-2zM473 690h2v2h-2zM473 690h2v2h-2zM474 687h2v2h-2zM474 689h2v2h-2zM474 690h2v2h-2zM475 686h2v2h-2zM475 688h2v2h-2zM475 690h2v2h-2zM475 687h2v2h-2zM475 685h2v2h-2zM476 684h2v2h-2zM477 685h2v2h-2zM478 687h2v2h-2zM475 686h2v2h-2zM475 688h2v2h-2zM475 690h2v2h-2zM476 686h2v2h-2zM476 688h2v2h-2zM476 690h2v2h-2zM477 688h2v2h-2zM477 690h2v2h-2zM477 690h2v2h-2zM477 686h2v2h-2zM477 688h2v2h-2zM477 690h2v2h-2zM478 685h2v2h-2zM478 687h2v2h-2zM478 689h2v2h-2zM479 688h2v2h-2zM479 690h2v2h-2zM479 690h2v2h-2zM479 689h2v2h-2zM479 690h2v2h-2zM479 690h2v2h-2zM480 690h2v2h-2zM480 690h2v2h-2zM480 690h2v2h-2zM481 688h2v2h-2zM481 690h2v2h-2zM481 690h2v2h-2zM482 690h2v2h-2zM482 690h2v2h-2zM482 690h2v2h-2zM482 689h2v2h-2zM482 690h2v2h-2zM482 690h2v2h-2zM483 690h2v2h-2zM483 690h2v2h-2zM483 690h2v2h-2zM484 688h2v2h-2zM484 690h2v2h-2zM484 690h2v2h-2zM484 689h2v2h-2zM484 690h2v2h-2zM484 690h2v2h-2zM485 690h2v2h-2zM485 690h2v2h-2zM485 690h2v2h-2zM486 690h2v2h-2zM486 690h2v2h-2zM486 690h2v2h-2zM486 687h2v2h-2zM486 689h2v2h-2zM486 690h2v2h-2zM487 689h2v2h-2zM487 690h2v2h-2zM487 690h2v2h-2zM488 690h2v2h-2zM488 690h2v2h-2zM488 690h2v2h-2zM489 690h2v2h-2zM489 690h2v2h-2zM489 690h2v2h-2zM489 690h2v2h-2zM489 690h2v2h-2zM489 690h2v2h-2zM490 690h2v2h-2zM490 690h2v2h-2zM490 690h2v2h-2zM491 690h2v2h-2zM491 690h2v2h-2zM491 690h2v2h-2zM491 690h2v2h-2zM491 690h2v2h-2zM491 690h2v2h-2zM492 690h2v2h-2zM492 690h2v2h-2zM492 690h2v2h-2zM493 690h2v2h-2zM493 690h2v2h-2zM493 690h2v2h-2zM493 690h2v2h-2zM493 690h2v2h-2zM493 690h2v2h-2zM494 690h2v2h-2zM494 690h2v2h-2zM494 690h2v2h-2zM495 688h2v2h-2zM495 690h2v2h-2zM495 690h2v2h-2zM496 688h2v2h-2zM496 690h2v2h-2zM496 690h2v2h-2zM496 690h2v2h-2zM496 690h2v2h-2zM496 690h2v2h-2zM497 688h2v2h-2zM497 690h2v2h-2zM497 690h2v2h-2zM498 688h2v2h-2zM498 690h2v2h-2zM498 690h2v2h-2zM498 687h2v2h-2zM498 689h2v2h-2zM498 690h2v2h-2zM499 688h2v2h-2zM499 690h2v2h-2zM499 690h2v2h-2zM500 687h2v2h-2zM500 689h2v2h-2zM500 690h2v2h-2zM500 686h2v2h-2zM500 688h2v2h-2zM500 690h2v2h-2zM501 687h2v2h-2zM501 689h2v2h-2zM501 690h2v2h-2zM502 687h2v2h-2zM502 689h2v2h-2zM502 690h2v2h-2zM503 684h2v2h-2zM503 686h2v2h-2zM503 688h2v2h-2zM503 686h2v2h-2zM503 688h2v2h-2zM503 690h2v2h-2zM504 686h2v2h-2zM504 688h2v2h-2zM504 690h2v2h-2zM505 686h2v2h-2zM505 688h2v2h-2zM505 690h2v2h-2zM685 688h2v2h-2zM685 690h2v2h-2zM685 691h2v2h-2zM686 687h2v2h-2zM686 689h2v2h-2zM686 691h2v2h-2zM686 689h2v2h-2zM686 691h2v2h-2zM686 691h2v2h-2zM687 687h2v2h-2zM687 689h2v2h-2zM687 691h2v2h-2zM688 689h2v2h-2zM688 691h2v2h-2zM688 691h2v2h-2zM689 688h2v2h-2zM689 690h2v2h-2zM689 691h2v2h-2zM689 688h2v2h-2zM689 690h2v2h-2zM689 691h2v2h-2zM690 688h2v2h-2zM690 690h2v2h-2zM690 691h2v2h-2zM691 689h2v2h-2zM691 691h2v2h-2zM691 691h2v2h-2zM691 690h2v2h-2zM691 691h2v2h-2zM691 691h2v2h-2zM692 691h2v2h-2zM692 691h2v2h-2zM692 691h2v2h-2zM693 689h2v2h-2zM693 691h2v2h-2zM693 691h2v2h-2zM693 689h2v2h-2zM693 691h2v2h-2zM693 691h2v2h-2zM694 689h2v2h-2zM694 691h2v2h-2zM694 691h2v2h-2zM695 686h2v2h-2zM695 688h2v2h-2zM695 690h2v2h-2zM696 686h2v2h-2zM696 688h2v2h-2zM696 690h2v2h-2zM696 687h2v2h-2zM696 689h2v2h-2zM696 691h2v2h-2zM697 691h2v2h-2zM697 691h2v2h-2zM697 691h2v2h-2zM698 686h2v2h-2zM698 688h2v2h-2zM698 690h2v2h-2zM698 689h2v2h-2zM698 691h2v2h-2zM698 691h2v2h-2zM699 691h2v2h-2zM699 691h2v2h-2zM699 691h2v2h-2zM700 691h2v2h-2zM700 691h2v2h-2zM700 691h2v2h-2zM700 690h2v2h-2zM700 691h2v2h-2zM700 691h2v2h-2zM701 691h2v2h-2zM701 691h2v2h-2zM701 691h2v2h-2zM702 691h2v2h-2zM702 691h2v2h-2zM702 691h2v2h-2zM703 691h2v2h-2zM703 691h2v2h-2zM703 691h2v2h-2zM703 689h2v2h-2zM703 691h2v2h-2zM703 691h2v2h-2zM704 686h2v2h-2zM704 688h2v2h-2zM704 690h2v2h-2zM705 687h2v2h-2zM705 689h2v2h-2zM705 691h2v2h-2zM705 687h2v2h-2zM705 689h2v2h-2zM705 691h2v2h-2zM706 688h2v2h-2zM706 690h2v2h-2zM706 691h2v2h-2zM707 690h2v2h-2zM707 691h2v2h-2zM707 691h2v2h-2zM707 691h2v2h-2zM707 691h2v2h-2zM707 691h2v2h-2zM708 691h2v2h-2zM708 691h2v2h-2zM708 691h2v2h-2zM709 691h2v2h-2zM709 691h2v2h-2zM709 691h2v2h-2zM710 690h2v2h-2zM710 691h2v2h-2zM710 691h2v2h-2zM710 689h2v2h-2zM710 691h2v2h-2zM710 691h2v2h-2zM711 686h2v2h-2zM711 688h2v2h-2zM711 690h2v2h-2zM712 686h2v2h-2zM712 688h2v2h-2zM712 690h2v2h-2zM712 686h2v2h-2zM712 688h2v2h-2zM712 690h2v2h-2zM713 686h2v2h-2zM713 688h2v2h-2zM713 690h2v2h-2zM714 690h2v2h-2zM714 691h2v2h-2zM714 691h2v2h-2zM714 689h2v2h-2zM714 691h2v2h-2zM714 691h2v2h-2zM715 688h2v2h-2zM715 690h2v2h-2zM715 691h2v2h-2zM716 689h2v2h-2zM716 691h2v2h-2zM716 691h2v2h-2zM717 689h2v2h-2zM717 691h2v2h-2zM717 691h2v2h-2zM717 688h2v2h-2zM717 690h2v2h-2zM717 691h2v2h-2zM718 687h2v2h-2zM718 689h2v2h-2zM718 691h2v2h-2zM719 687h2v2h-2zM719 689h2v2h-2zM719 691h2v2h-2zM719 688h2v2h-2zM719 687h2v2h-2zM720 686h2v2h-2zM721 687h2v2h-2zM722 688h2v2h-2zM719 689h2v2h-2zM719 691h2v2h-2zM719 691h2v2h-2zM720 691h2v2h-2zM720 691h2v2h-2zM720 691h2v2h-2zM721 691h2v2h-2zM721 691h2v2h-2zM721 691h2v2h-2zM721 689h2v2h-2zM721 691h2v2h-2zM721 691h2v2h-2zM722 689h2v2h-2zM722 691h2v2h-2zM722 691h2v2h-2zM723 689h2v2h-2zM723 691h2v2h-2zM723 691h2v2h-2zM724 688h2v2h-2zM724 690h2v2h-2zM724 691h2v2h-2zM724 690h2v2h-2zM724 691h2v2h-2zM724 691h2v2h-2zM725 690h2v2h-2zM725 691h2v2h-2zM725 691h2v2h-2zM726 691h2v2h-2zM726 691h2v2h-2zM726 691h2v2h-2zM726 691h2v2h-2zM726 691h2v2h-2zM726 691h2v2h-2zM727 690h2v2h-2zM727 691h2v2h-2zM727 691h2v2h-2zM728 688h2v2h-2zM728 690h2v2h-2zM728 691h2v2h-2zM728 686h2v2h-2zM728 688h2v2h-2zM728 690h2v2h-2zM729 687h2v2h-2zM729 689h2v2h-2zM729 691h2v2h-2zM730 688h2v2h-2zM730 690h2v2h-2zM730 691h2v2h-2zM731 687h2v2h-2zM731 689h2v2h-2zM731 691h2v2h-2zM731 690h2v2h-2zM731 691h2v2h-2zM731 691h2v2h-2zM732 689h2v2h-2zM732 691h2v2h-2zM732 691h2v2h-2zM733 688h2v2h-2zM733 690h2v2h-2zM733 691h2v2h-2zM733 687h2v2h-2zM733 689h2v2h-2zM733 691h2v2h-2zM734 688h2v2h-2zM734 690h2v2h-2zM734 691h2v2h-2zM735 688h2v2h-2zM735 690h2v2h-2zM735 691h2v2h-2zM735 688h2v2h-2zM735 690h2v2h-2zM735 691h2v2h-2zM736 689h2v2h-2zM736 691h2v2h-2zM736 691h2v2h-2zM737 690h2v2h-2zM737 691h2v2h-2zM737 691h2v2h-2zM738 688h2v2h-2zM738 690h2v2h-2zM738 691h2v2h-2zM738 686h2v2h-2zM738 688h2v2h-2zM738 690h2v2h-2zM739 687h2v2h-2zM739 689h2v2h-2zM739 691h2v2h-2zM740 689h2v2h-2zM740 691h2v2h-2zM740 691h2v2h-2zM740 689h2v2h-2zM740 691h2v2h-2zM740 691h2v2h-2zM741 689h2v2h-2zM741 691h2v2h-2zM741 691h2v2h-2zM742 686h2v2h-2zM742 688h2v2h-2zM742 690h2v2h-2zM742 688h2v2h-2zM742 690h2v2h-2zM742 691h2v2h-2zM743 689h2v2h-2zM743 691h2v2h-2zM743 691h2v2h-2zM744 690h2v2h-2zM744 691h2v2h-2zM744 691h2v2h-2zM745 689h2v2h-2zM745 691h2v2h-2zM745 691h2v2h-2zM745 687h2v2h-2zM745 689h2v2h-2zM745 691h2v2h-2zM746 688h2v2h-2zM746 690h2v2h-2zM746 691h2v2h-2zM747 690h2v2h-2zM747 691h2v2h-2zM747 691h2v2h-2zM747 688h2v2h-2zM747 690h2v2h-2zM747 691h2v2h-2zM748 689h2v2h-2zM748 691h2v2h-2zM748 691h2v2h-2zM749 689h2v2h-2zM749 691h2v2h-2zM749 691h2v2h-2zM749 691h2v2h-2zM749 691h2v2h-2zM749 691h2v2h-2zM750 691h2v2h-2zM750 691h2v2h-2zM750 691h2v2h-2zM751 691h2v2h-2zM751 691h2v2h-2zM751 691h2v2h-2zM752 690h2v2h-2zM752 691h2v2h-2zM752 691h2v2h-2zM752 691h2v2h-2zM752 691h2v2h-2zM752 691h2v2h-2zM753 691h2v2h-2zM753 691h2v2h-2zM753 691h2v2h-2zM754 690h2v2h-2zM754 691h2v2h-2zM754 691h2v2h-2zM754 691h2v2h-2zM754 691h2v2h-2zM754 691h2v2h-2zM755 690h2v2h-2zM755 691h2v2h-2zM755 691h2v2h-2zM756 691h2v2h-2zM756 691h2v2h-2zM756 691h2v2h-2zM756 689h2v2h-2zM756 691h2v2h-2zM756 691h2v2h-2zM757 688h2v2h-2zM757 690h2v2h-2zM757 691h2v2h-2zM758 690h2v2h-2zM758 691h2v2h-2zM758 691h2v2h-2zM759 690h2v2h-2zM759 691h2v2h-2zM759 691h2v2h-2zM759 689h2v2h-2zM759 691h2v2h-2zM759 691h2v2h-2zM760 690h2v2h-2zM760 691h2v2h-2zM760 691h2v2h-2zM761 689h2v2h-2zM761 691h2v2h-2zM761 691h2v2h-2zM761 691h2v2h-2zM761 691h2v2h-2zM761 691h2v2h-2zM799 689h2v2h-2zM799 690h2v2h-2zM799 690h2v2h-2zM800 688h2v2h-2zM800 690h2v2h-2zM800 690h2v2h-2zM800 688h2v2h-2zM800 690h2v2h-2zM800 690h2v2h-2zM801 689h2v2h-2zM801 690h2v2h-2zM801 690h2v2h-2zM802 686h2v2h-2zM802 688h2v2h-2zM802 690h2v2h-2zM803 689h2v2h-2zM803 690h2v2h-2zM803 690h2v2h-2zM803 686h2v2h-2zM803 688h2v2h-2zM803 690h2v2h-2zM804 687h2v2h-2zM804 689h2v2h-2zM804 690h2v2h-2zM804 686h2v2h-2zM805 684h2v2h-2zM806 682h2v2h-2zM806 684h2v2h-2zM807 686h2v2h-2zM805 688h2v2h-2zM805 690h2v2h-2zM805 690h2v2h-2zM805 686h2v2h-2zM805 688h2v2h-2zM805 690h2v2h-2zM806 685h2v2h-2zM806 687h2v2h-2zM806 689h2v2h-2zM807 687h2v2h-2zM807 689h2v2h-2zM807 690h2v2h-2zM807 688h2v2h-2zM807 690h2v2h-2zM807 690h2v2h-2zM808 687h2v2h-2zM808 689h2v2h-2zM808 690h2v2h-2zM808 687h2v2h-2zM809 685h2v2h-2zM810 684h2v2h-2zM811 685h2v2h-2zM811 687h2v2h-2zM809 689h2v2h-2zM809 690h2v2h-2zM809 690h2v2h-2zM810 688h2v2h-2zM810 690h2v2h-2zM810 690h2v2h-2zM810 687h2v2h-2zM810 689h2v2h-2zM810 690h2v2h-2zM811 684h2v2h-2zM811 686h2v2h-2zM811 688h2v2h-2zM812 686h2v2h-2zM812 688h2v2h-2zM812 690h2v2h-2zM812 686h2v2h-2zM812 685h2v2h-2zM813 683h2v2h-2zM814 685h2v2h-2zM815 686h2v2h-2zM812 684h2v2h-2zM812 686h2v2h-2zM812 688h2v2h-2zM813 687h2v2h-2zM813 689h2v2h-2zM813 690h2v2h-2zM814 686h2v2h-2zM814 688h2v2h-2zM814 690h2v2h-2zM814 687h2v2h-2zM814 689h2v2h-2zM814 690h2v2h-2zM815 688h2v2h-2zM815 690h2v2h-2zM815 690h2v2h-2zM815 687h2v2h-2zM816 685h2v2h-2zM817 684h2v2h-2zM818 685h2v2h-2zM818 687h2v2h-2zM816 687h2v2h-2zM816 689h2v2h-2zM816 690h2v2h-2zM817 688h2v2h-2zM817 690h2v2h-2zM817 690h2v2h-2zM817 688h2v2h-2zM817 690h2v2h-2zM817 690h2v2h-2zM818 688h2v2h-2zM818 690h2v2h-2zM818 690h2v2h-2zM819 687h2v2h-2zM819 689h2v2h-2zM819 690h2v2h-2zM819 688h2v2h-2zM819 690h2v2h-2zM819 690h2v2h-2zM820 687h2v2h-2zM820 689h2v2h-2zM820 690h2v2h-2zM821 688h2v2h-2zM821 690h2v2h-2zM821 690h2v2h-2zM821 690h2v2h-2zM821 690h2v2h-2zM821 690h2v2h-2zM822 689h2v2h-2zM822 690h2v2h-2zM822 690h2v2h-2zM823 688h2v2h-2zM823 690h2v2h-2zM823 690h2v2h-2zM824 688h2v2h-2zM824 690h2v2h-2zM824 690h2v2h-2zM824 686h2v2h-2zM824 688h2v2h-2zM824 690h2v2h-2zM825 685h2v2h-2zM825 687h2v2h-2zM825 689h2v2h-2zM826 688h2v2h-2zM826 690h2v2h-2zM826 690h2v2h-2zM826 689h2v2h-2zM826 690h2v2h-2zM826 690h2v2h-2zM827 689h2v2h-2zM827 690h2v2h-2zM827 690h2v2h-2zM828 687h2v2h-2zM828 689h2v2h-2zM828 690h2v2h-2zM828 687h2v2h-2zM828 689h2v2h-2zM828 690h2v2h-2zM829 686h2v2h-2zM829 688h2v2h-2zM829 690h2v2h-2zM830 687h2v2h-2zM830 689h2v2h-2zM830 690h2v2h-2zM831 687h2v2h-2zM831 689h2v2h-2zM831 690h2v2h-2zM831 686h2v2h-2zM831 688h2v2h-2zM831 690h2v2h-2zM832 688h2v2h-2zM832 690h2v2h-2zM832 690h2v2h-2zM833 686h2v2h-2zM833 688h2v2h-2zM833 690h2v2h-2zM833 685h2v2h-2zM833 687h2v2h-2zM833 689h2v2h-2zM834 687h2v2h-2zM834 689h2v2h-2zM834 690h2v2h-2zM835 684h2v2h-2zM835 686h2v2h-2zM835 688h2v2h-2zM835 687h2v2h-2zM835 689h2v2h-2zM835 690h2v2h-2zM836 687h2v2h-2zM836 689h2v2h-2zM836 690h2v2h-2zM837 689h2v2h-2zM837 690h2v2h-2zM837 690h2v2h-2zM153 687h2v2h-2zM154 686h2v2h-2zM155 684h2v2h-2zM155 683h2v2h-2zM156 682h2v2h-2zM157 683h2v2h-2zM157 684h2v2h-2zM158 686h2v2h-2zM159 687h2v2h-2zM249 688h2v2h-2zM250 686h2v2h-2zM251 686h2v2h-2zM251 684h2v2h-2zM252 684h2v2h-2zM253 684h2v2h-2zM253 686h2v2h-2zM254 686h2v2h-2zM255 688h2v2h-2zM294 687h2v2h-2zM295 686h2v2h-2zM296 684h2v2h-2zM296 683h2v2h-2zM297 682h2v2h-2zM298 683h2v2h-2zM298 684h2v2h-2zM299 686h2v2h-2zM300 687h2v2h-2zM307 687h2v2h-2zM308 686h2v2h-2zM309 684h2v2h-2zM309 683h2v2h-2zM310 682h2v2h-2zM311 683h2v2h-2zM311 684h2v2h-2zM312 686h2v2h-2zM313 687h2v2h-2zM325 688h2v2h-2zM326 686h2v2h-2zM327 686h2v2h-2zM327 684h2v2h-2zM328 684h2v2h-2zM329 684h2v2h-2zM329 686h2v2h-2zM330 686h2v2h-2zM331 688h2v2h-2zM378 687h2v2h-2zM379 686h2v2h-2zM380 684h2v2h-2zM380 683h2v2h-2zM381 682h2v2h-2zM382 683h2v2h-2zM382 684h2v2h-2zM383 686h2v2h-2zM384 687h2v2h-2zM442 688h2v2h-2zM443 686h2v2h-2zM444 686h2v2h-2zM444 684h2v2h-2zM445 684h2v2h-2zM446 684h2v2h-2zM446 686h2v2h-2zM447 686h2v2h-2zM448 688h2v2h-2zM738 688h2v2h-2zM739 686h2v2h-2zM740 686h2v2h-2zM740 684h2v2h-2zM741 684h2v2h-2zM742 684h2v2h-2zM742 686h2v2h-2zM743 686h2v2h-2zM744 688h2v2h-2zM745 688h2v2h-2zM746 687h2v2h-2zM747 686h2v2h-2zM747 685h2v2h-2zM748 684h2v2h-2zM749 685h2v2h-2zM749 686h2v2h-2zM750 687h2v2h-2zM751 688h2v2h-2zM138 691h2v2h-2zM535 689h2v2h-2zM535 688h2v2h-2zM536 688h2v2h-2zM538 690h2v2h-2zM538 690h2v2h-2zM538 686h2v2h-2zM540 690h2v2h-2zM540 690h2v2h-2zM541 691h2v2h-2zM542 688h2v2h-2zM542 684h2v2h-2zM543 689h2v2h-2zM543 689h2v2h-2zM544 683h2v2h-2zM544 684h2v2h-2zM546 687h2v2h-2zM548 690h2v2h-2zM549 686h2v2h-2zM549 686h2v2h-2zM550 690h2v2h-2zM550 690h2v2h-2zM550 690h2v2h-2zM551 689h2v2h-2zM551 686h2v2h-2zM552 678h2v2h-2zM552 689h2v2h-2zM552 686h2v2h-2zM553 681h2v2h-2zM554 690h2v2h-2zM554 683h2v2h-2zM555 689h2v2h-2zM555 684h2v2h-2zM556 683h2v2h-2zM556 691h2v2h-2zM556 685h2v2h-2zM557 690h2v2h-2zM557 687h2v2h-2zM557 685h2v2h-2zM558 690h2v2h-2zM558 681h2v2h-2zM559 680h2v2h-2zM559 687h2v2h-2zM560 684h2v2h-2zM560 683h2v2h-2zM560 689h2v2h-2zM561 688h2v2h-2zM562 681h2v2h-2zM562 686h2v2h-2zM563 685h2v2h-2zM564 685h2v2h-2zM564 686h2v2h-2zM564 686h2v2h-2zM565 687h2v2h-2zM565 686h2v2h-2zM565 687h2v2h-2zM566 686h2v2h-2zM566 691h2v2h-2zM567 688h2v2h-2zM567 679h2v2h-2zM568 684h2v2h-2zM568 690h2v2h-2zM568 690h2v2h-2zM569 689h2v2h-2zM569 679h2v2h-2zM570 690h2v2h-2zM570 687h2v2h-2zM571 690h2v2h-2zM571 686h2v2h-2zM572 688h2v2h-2zM572 681h2v2h-2zM573 685h2v2h-2zM573 690h2v2h-2zM574 686h2v2h-2zM574 687h2v2h-2zM575 689h2v2h-2zM575 680h2v2h-2zM575 691h2v2h-2zM577 685h2v2h-2zM577 686h2v2h-2zM577 684h2v2h-2zM578 686h2v2h-2zM578 682h2v2h-2zM578 689h2v2h-2zM579 689h2v2h-2zM580 683h2v2h-2zM580 691h2v2h-2zM580 686h2v2h-2zM581 688h2v2h-2zM581 690h2v2h-2zM582 680h2v2h-2zM582 685h2v2h-2zM583 685h2v2h-2zM584 690h2v2h-2zM584 690h2v2h-2zM584 688h2v2h-2zM585 688h2v2h-2zM585 689h2v2h-2zM586 689h2v2h-2zM586 691h2v2h-2zM586 682h2v2h-2zM587 684h2v2h-2zM588 687h2v2h-2zM588 689h2v2h-2zM589 690h2v2h-2zM590 689h2v2h-2zM590 687h2v2h-2zM590 686h2v2h-2zM591 686h2v2h-2zM591 688h2v2h-2zM591 689h2v2h-2zM592 686h2v2h-2zM593 689h2v2h-2zM593 684h2v2h-2zM594 690h2v2h-2zM594 682h2v2h-2zM595 686h2v2h-2zM596 691h2v2h-2zM596 691h2v2h-2zM597 686h2v2h-2zM598 682h2v2h-2zM598 680h2v2h-2zM599 687h2v2h-2zM599 688h2v2h-2zM600 690h2v2h-2zM600 684h2v2h-2zM603 685h2v2h-2zM603 690h2v2h-2zM603 690h2v2h-2zM604 688h2v2h-2zM604 686h2v2h-2zM604 689h2v2h-2zM605 673h2v2h-2zM605 686h2v2h-2zM605 684h2v2h-2zM606 684h2v2h-2zM606 687h2v2h-2zM606 685h2v2h-2zM607 680h2v2h-2zM607 690h2v2h-2zM607 690h2v2h-2zM608 681h2v2h-2zM609 687h2v2h-2zM609 690h2v2h-2zM610 689h2v2h-2zM610 680h2v2h-2zM610 687h2v2h-2zM611 689h2v2h-2zM612 688h2v2h-2zM612 686h2v2h-2zM613 687h2v2h-2zM613 691h2v2h-2zM614 682h2v2h-2zM614 688h2v2h-2zM615 689h2v2h-2zM615 683h2v2h-2zM616 688h2v2h-2zM617 687h2v2h-2zM617 687h2v2h-2zM617 686h2v2h-2zM618 690h2v2h-2zM619 687h2v2h-2zM621 683h2v2h-2zM621 690h2v2h-2zM622 688h2v2h-2zM622 688h2v2h-2zM623 681h2v2h-2zM624 691h2v2h-2zM625 689h2v2h-2zM625 685h2v2h-2zM626 689h2v2h-2zM627 683h2v2h-2zM628 690h2v2h-2zM628 691h2v2h-2zM629 680h2v2h-2zM630 690h2v2h-2zM631 687h2v2h-2zM632 681h2v2h-2zM633 687h2v2h-2zM634 680h2v2h-2zM634 689h2v2h-2zM635 688h2v2h-2zM636 691h2v2h-2zM636 688h2v2h-2zM637 688h2v2h-2zM637 687h2v2h-2zM638 684h2v2h-2zM638 691h2v2h-2zM639 677h2v2h-2zM639 689h2v2h-2zM640 688h2v2h-2zM640 684h2v2h-2zM640 686h2v2h-2zM641 685h2v2h-2zM641 687h2v2h-2zM641 682h2v2h-2zM642 684h2v2h-2zM642 686h2v2h-2zM642 687h2v2h-2zM643 687h2v2h-2zM643 687h2v2h-2zM643 689h2v2h-2zM644 689h2v2h-2zM644 682h2v2h-2zM645 682h2v2h-2zM645 686h2v2h-2zM645 682h2v2h-2zM537 665h2v2h-2zM537 668h2v2h-2zM548 670h2v2h-2zM548 675h2v2h-2zM548 678h2v2h-2zM555 665h2v2h-2zM555 679h2v2h-2zM564 669h2v2h-2zM564 673h2v2h-2zM564 676h2v2h-2zM564 679h2v2h-2zM569 676h2v2h-2zM569 679h2v2h-2zM569 682h2v2h-2zM576 675h2v2h-2zM576 679h2v2h-2zM576 682h2v2h-2zM592 667h2v2h-2zM592 672h2v2h-2zM592 676h2v2h-2zM592 679h2v2h-2zM592 683h2v2h-2zM607 678h2v2h-2zM607 682h2v2h-2zM607 686h2v2h-2zM614 670h2v2h-2zM614 677h2v2h-2zM626 679h2v2h-2zM626 683h2v2h-2zM640 672h2v2h-2zM640 675h2v2h-2zM640 679h2v2h-2zM339 689h2v2h-2zM339 688h2v2h-2zM340 686h2v2h-2zM340 685h2v2h-2zM340 683h2v2h-2zM340 682h2v2h-2zM341 680h2v2h-2zM341 679h2v2h-2zM341 677h2v2h-2zM341 676h2v2h-2zM341 674h2v2h-2zM341 673h2v2h-2zM341 671h2v2h-2zM341 670h2v2h-2zM504 689h2v2h-2zM505 688h2v2h-2zM505 686h2v2h-2zM506 685h2v2h-2zM506 683h2v2h-2zM507 682h2v2h-2zM507 681h2v2h-2zM508 679h2v2h-2zM508 678h2v2h-2zM509 676h2v2h-2zM646 643h2v2h-2zM645 650h2v2h-2zM645 656h2v2h-2zM637 689h2v2h-2zM638 688h2v2h-2zM638 686h2v2h-2zM639 685h2v2h-2zM640 684h2v2h-2zM640 682h2v2h-2zM641 681h2v2h-2zM641 679h2v2h-2zM642 678h2v2h-2zM642 677h2v2h-2zM643 675h2v2h-2zM643 676h2v2h-2zM643 678h2v2h-2zM643 679h2v2h-2zM643 681h2v2h-2zM644 682h2v2h-2zM644 684h2v2h-2zM644 685h2v2h-2zM644 687h2v2h-2zM761 689h2v2h-2zM761 688h2v2h-2zM761 686h2v2h-2zM762 685h2v2h-2zM762 683h2v2h-2zM762 682h2v2h-2zM762 680h2v2h-2zM762 679h2v2h-2zM763 677h2v2h-2zM763 676h2v2h-2zM838 667h2v2h-2zM838 671h2v2h-2zM838 675h2v2h-2zM838 679h2v2h-2zM838 681h2v2h-2zM838 682h2v2h-2zM838 684h2v2h-2zM837 685h2v2h-2zM837 687h2v2h-2zM837 688h2v2h-2zM848 685h2v2h-2zM849 684h2v2h-2zM849 682h2v2h-2zM850 681h2v2h-2zM850 680h2v2h-2zM851 681h2v2h-2zM852 683h2v2h-2zM852 684h2v2h-2zM853 686h2v2h-2zM853 687h2v2h-2zM853 689h2v2h-2zM854 681h2v2h-2zM856 680h2v2h-2zM856 681h2v2h-2zM855 683h2v2h-2zM855 685h2v2h-2zM855 687h2v2h-2zM855 688h2v2h-2zM856 690h2v2h-2zM856 692h2v2h-2zM851 690h2v2h-2zM849 688h2v2h-2z"/>
<path fill="#808080" d="M535 688h2v2h-2zM536 687h2v2h-2zM536 691h2v2h-2zM537 679h2v2h-2zM537 680h2v2h-2zM537 688h2v2h-2zM539 689h2v2h-2zM539 683h2v2h-2zM539 688h2v2h-2zM540 679h2v2h-2zM541 685h2v2h-2zM541 684h2v2h-2zM542 685h2v2h-2zM543 689h2v2h-2zM544 689h2v2h-2zM545 688h2v2h-2zM545 690h2v2h-2zM545 686h2v2h-2zM546 688h2v2h-2zM546 690h2v2h-2zM547 688h2v2h-2zM547 691h2v2h-2zM547 690h2v2h-2zM548 685h2v2h-2zM548 685h2v2h-2zM549 689h2v2h-2zM551 690h2v2h-2zM553 689h2v2h-2zM553 687h2v2h-2zM554 684h2v2h-2zM555 684h2v2h-2zM558 683h2v2h-2zM559 685h2v2h-2zM561 688h2v2h-2zM561 684h2v2h-2zM562 685h2v2h-2zM563 683h2v2h-2zM563 689h2v2h-2zM566 691h2v2h-2zM567 683h2v2h-2zM569 687h2v2h-2zM570 687h2v2h-2zM571 684h2v2h-2zM572 689h2v2h-2zM573 690h2v2h-2zM574 684h2v2h-2zM576 690h2v2h-2zM576 685h2v2h-2zM576 686h2v2h-2zM579 682h2v2h-2zM579 684h2v2h-2zM581 684h2v2h-2zM582 690h2v2h-2zM583 685h2v2h-2zM583 686h2v2h-2zM585 690h2v2h-2zM587 690h2v2h-2zM587 682h2v2h-2zM588 687h2v2h-2zM589 691h2v2h-2zM589 687h2v2h-2zM592 686h2v2h-2zM592 688h2v2h-2zM593 683h2v2h-2zM594 679h2v2h-2zM595 689h2v2h-2zM595 688h2v2h-2zM596 684h2v2h-2zM597 682h2v2h-2zM597 686h2v2h-2zM598 689h2v2h-2zM599 690h2v2h-2zM600 687h2v2h-2zM601 690h2v2h-2zM601 687h2v2h-2zM601 689h2v2h-2zM602 690h2v2h-2zM602 690h2v2h-2zM602 684h2v2h-2zM608 681h2v2h-2zM608 690h2v2h-2zM609 684h2v2h-2zM611 689h2v2h-2zM611 684h2v2h-2zM612 687h2v2h-2zM613 684h2v2h-2zM614 681h2v2h-2zM615 691h2v2h-2zM616 688h2v2h-2zM616 691h2v2h-2zM618 685h2v2h-2zM618 690h2v2h-2zM619 681h2v2h-2zM619 689h2v2h-2zM620 690h2v2h-2zM620 687h2v2h-2zM620 687h2v2h-2zM621 683h2v2h-2zM622 688h2v2h-2zM623 690h2v2h-2zM623 686h2v2h-2zM624 689h2v2h-2zM624 691h2v2h-2zM625 689h2v2h-2zM626 686h2v2h-2zM626 690h2v2h-2zM627 688h2v2h-2zM627 681h2v2h-2zM628 681h2v2h-2zM629 686h2v2h-2zM629 689h2v2h-2zM630 688h2v2h-2zM630 689h2v2h-2zM631 691h2v2h-2zM631 688h2v2h-2zM632 683h2v2h-2zM632 687h2v2h-2zM633 682h2v2h-2zM633 688h2v2h-2zM634 686h2v2h-2zM635 686h2v2h-2zM635 691h2v2h-2zM636 691h2v2h-2zM637 691h2v2h-2zM638 689h2v2h-2zM639 688h2v2h-2zM644 686h2v2h-2zM555 668h2v2h-2zM555 670h2v2h-2zM555 672h2v2h-2zM596 668h2v2h-2zM596 671h2v2h-2zM599 675h2v2h-2zM599 677h2v2h-2zM622 664h2v2h-2zM622 667h2v2h-2zM622 669h2v2h-2zM622 672h2v2h-2zM627 673h2v2h-2zM627 676h2v2h-2zM632 674h2v2h-2zM632 677h2v2h-2zM538 671h2v2h-2zM539 672h2v2h-2zM540 673h2v2h-2zM541 674h2v2h-2zM542 675h2v2h-2zM543 677h2v2h-2zM543 678h2v2h-2zM544 680h2v2h-2zM544 681h2v2h-2zM545 682h2v2h-2zM342 666h2v2h-2zM342 661h2v2h-2zM342 656h2v2h-2zM342 651h2v2h-2zM342 646h2v2h-2zM343 641h2v2h-2zM343 636h2v2h-2zM509 680h2v2h-2zM510 674h2v2h-2zM510 667h2v2h-2zM511 661h2v2h-2zM511 654h2v2h-2zM511 648h2v2h-2zM512 641h2v2h-2zM512 635h2v2h-2zM512 628h2v2h-2zM512 622h2v2h-2zM512 615h2v2h-2zM513 609h2v2h-2zM513 602h2v2h-2zM513 596h2v2h-2zM513 589h2v2h-2zM513 583h2v2h-2zM645 673h2v2h-2zM645 664h2v2h-2zM645 655h2v2h-2zM646 646h2v2h-2zM646 637h2v2h-2zM646 628h2v2h-2zM646 619h2v2h-2zM646 610h2v2h-2zM646 601h2v2h-2zM646 592h2v2h-2zM647 583h2v2h-2zM647 574h2v2h-2zM647 565h2v2h-2zM647 556h2v2h-2zM635 687h2v2h-2zM636 685h2v2h-2zM637 683h2v2h-2zM638 682h2v2h-2zM639 680h2v2h-2zM639 680h2v2h-2zM640 682h2v2h-2zM641 684h2v2h-2zM642 686h2v2h-2zM642 687h2v2h-2zM643 689h2v2h-2zM765 673h2v2h-2zM765 668h2v2h-2zM765 662h2v2h-2zM788 681h2v2h-2zM788 680h2v2h-2zM789 678h2v2h-2zM789 677h2v2h-2zM789 675h2v2h-2zM789 674h2v2h-2zM790 672h2v2h-2zM790 671h2v2h-2zM790 669h2v2h-2zM790 668h2v2h-2zM791 666h2v2h-2zM791 665h2v2h-2zM791 665h2v2h-2zM792 666h2v2h-2zM837 667h2v2h-2zM838 665h2v2h-2zM838 663h2v2h-2zM838 661h2v2h-2zM839 659h2v2h-2zM839 657h2v2h-2zM840 652h2v2h-2zM840 654h2v2h-2zM840 655h2v2h-2zM840 656h2v2h-2zM845 689h2v2h-2zM845 688h2v2h-2zM846 686h2v2h-2zM846 685h2v2h-2zM847 683h2v2h-2z"/>
<path fill="#00ff00" d="M536 671h2v2h-2zM537 672h2v2h-2zM537 673h2v2h-2zM538 674h2v2h-2zM538 675h2v2h-2zM539 676h2v2h-2zM539 677h2v2h-2zM540 679h2v2h-2zM540 680h2v2h-2zM541 681h2v2h-2zM542 682h2v2h-2zM542 683h2v2h-2zM543 684h2v2h-2zM544 685h2v2h-2zM535 689h2v2h-2zM536 689h2v2h-2zM343 630h2v2h-2zM343 625h2v2h-2zM344 620h2v2h-2zM344 615h2v2h-2zM344 610h2v2h-2zM344 605h2v2h-2zM345 600h2v2h-2zM345 595h2v2h-2zM345 590h2v2h-2zM345 585h2v2h-2zM346 580h2v2h-2zM346 575h2v2h-2zM346 570h2v2h-2zM346 565h2v2h-2zM346 560h2v2h-2zM347 555h2v2h-2zM347 550h2v2h-2zM347 545h2v2h-2zM348 540h2v2h-2zM348 535h2v2h-2zM350 538h2v2h-2zM350 536h2v2h-2zM350 535h2v2h-2zM350 534h2v2h-2zM350 530h2v2h-2zM350 526h2v2h-2zM350 523h2v2h-2zM350 520h2v2h-2zM350 516h2v2h-2zM351 514h2v2h-2zM351 513h2v2h-2zM351 512h2v2h-2zM351 510h2v2h-2zM351 509h2v2h-2zM351 508h2v2h-2zM351 507h2v2h-2zM351 506h2v2h-2zM352 505h2v2h-2zM352 504h2v2h-2zM352 503h2v2h-2zM352 502h2v2h-2zM352 501h2v2h-2zM352 499h2v2h-2zM353 497h2v2h-2zM353 499h2v2h-2zM354 497h2v2h-2zM354 499h2v2h-2zM354 501h2v2h-2zM354 504h2v2h-2zM354 507h2v2h-2zM354 509h2v2h-2zM355 510h2v2h-2zM355 511h2v2h-2zM355 513h2v2h-2zM355 514h2v2h-2zM355 515h2v2h-2zM355 516h2v2h-2zM356 516h2v2h-2zM356 518h2v2h-2zM356 519h2v2h-2zM356 520h2v2h-2zM356 521h2v2h-2zM356 522h2v2h-2zM357 523h2v2h-2zM357 524h2v2h-2zM357 525h2v2h-2zM357 528h2v2h-2zM358 534h2v2h-2zM358 539h2v2h-2zM358 544h2v2h-2zM358 550h2v2h-2zM359 555h2v2h-2zM359 561h2v2h-2zM359 566h2v2h-2zM359 572h2v2h-2zM359 577h2v2h-2zM359 583h2v2h-2zM360 588h2v2h-2zM360 594h2v2h-2zM360 599h2v2h-2zM360 605h2v2h-2zM360 610h2v2h-2zM360 616h2v2h-2zM360 621h2v2h-2zM360 622h2v2h-2zM361 626h2v2h-2zM361 630h2v2h-2zM361 634h2v2h-2zM361 638h2v2h-2zM362 642h2v2h-2zM362 644h2v2h-2zM362 646h2v2h-2zM363 648h2v2h-2zM363 649h2v2h-2zM363 651h2v2h-2zM363 653h2v2h-2zM363 655h2v2h-2zM364 656h2v2h-2zM364 658h2v2h-2zM364 660h2v2h-2zM364 662h2v2h-2zM365 664h2v2h-2zM365 665h2v2h-2zM365 667h2v2h-2zM365 669h2v2h-2zM366 671h2v2h-2zM366 672h2v2h-2zM367 674h2v2h-2zM367 676h2v2h-2zM368 678h2v2h-2zM369 679h2v2h-2zM369 681h2v2h-2zM370 682h2v2h-2zM514 577h2v2h-2zM514 569h2v2h-2zM514 561h2v2h-2zM515 553h2v2h-2zM515 545h2v2h-2zM515 537h2v2h-2zM515 529h2v2h-2zM515 521h2v2h-2zM515 513h2v2h-2zM515 505h2v2h-2zM516 497h2v2h-2zM516 489h2v2h-2zM516 481h2v2h-2zM516 473h2v2h-2zM516 465h2v2h-2zM517 457h2v2h-2zM517 449h2v2h-2zM518 439h2v2h-2zM518 434h2v2h-2zM518 428h2v2h-2zM518 423h2v2h-2zM518 417h2v2h-2zM518 410h2v2h-2zM520 403h2v2h-2zM519 395h2v2h-2zM520 373h2v2h-2zM519 376h2v2h-2zM520 376h2v2h-2zM519 380h2v2h-2zM520 380h2v2h-2zM522 384h2v2h-2zM519 388h2v2h-2zM521 388h2v2h-2zM521 391h2v2h-2zM521 393h2v2h-2zM522 396h2v2h-2zM522 398h2v2h-2zM523 400h2v2h-2zM524 402h2v2h-2zM524 405h2v2h-2zM524 407h2v2h-2zM524 410h2v2h-2zM524 412h2v2h-2zM524 413h2v2h-2zM524 416h2v2h-2zM526 418h2v2h-2zM526 420h2v2h-2zM526 423h2v2h-2zM526 425h2v2h-2zM526 428h2v2h-2zM526 433h2v2h-2zM526 439h2v2h-2zM526 445h2v2h-2zM526 451h2v2h-2zM526 457h2v2h-2zM526 461h2v2h-2zM527 470h2v2h-2zM527 479h2v2h-2zM528 488h2v2h-2zM528 497h2v2h-2zM528 506h2v2h-2zM528 515h2v2h-2zM529 524h2v2h-2zM529 533h2v2h-2zM529 542h2v2h-2zM529 551h2v2h-2zM529 560h2v2h-2zM530 569h2v2h-2zM530 578h2v2h-2zM530 587h2v2h-2zM530 596h2v2h-2zM530 605h2v2h-2zM530 614h2v2h-2zM530 623h2v2h-2zM531 632h2v2h-2zM531 641h2v2h-2zM531 650h2v2h-2zM532 659h2v2h-2zM532 668h2v2h-2zM534 677h2v2h-2zM535 686h2v2h-2zM647 537h2v2h-2zM647 530h2v2h-2zM647 523h2v2h-2zM647 516h2v2h-2zM648 509h2v2h-2zM648 502h2v2h-2zM648 495h2v2h-2zM648 488h2v2h-2zM648 481h2v2h-2zM649 474h2v2h-2zM649 467h2v2h-2zM649 460h2v2h-2zM649 453h2v2h-2zM649 446h2v2h-2zM649 439h2v2h-2zM650 432h2v2h-2zM650 425h2v2h-2zM650 418h2v2h-2zM650 411h2v2h-2zM651 404h2v2h-2zM651 397h2v2h-2zM651 390h2v2h-2zM651 381h2v2h-2zM655 355h2v2h-2zM655 359h2v2h-2zM655 363h2v2h-2zM652 366h2v2h-2zM655 368h2v2h-2zM652 370h2v2h-2zM653 372h2v2h-2zM654 373h2v2h-2zM652 375h2v2h-2zM653 376h2v2h-2zM656 349h2v2h-2zM656 350h2v2h-2zM656 351h2v2h-2zM657 349h2v2h-2zM657 350h2v2h-2zM657 351h2v2h-2zM658 349h2v2h-2zM658 350h2v2h-2zM658 351h2v2h-2zM659 349h2v2h-2zM659 350h2v2h-2zM659 351h2v2h-2zM660 349h2v2h-2zM660 350h2v2h-2zM660 351h2v2h-2zM661 349h2v2h-2zM661 350h2v2h-2zM661 351h2v2h-2zM662 349h2v2h-2zM662 350h2v2h-2zM662 351h2v2h-2zM656 348h2v2h-2zM662 348h2v2h-2zM655 352h2v2h-2zM658 354h2v2h-2zM662 354h2v2h-2zM662 358h2v2h-2zM662 363h2v2h-2zM662 370h2v2h-2zM662 376h2v2h-2zM662 382h2v2h-2zM662 389h2v2h-2zM663 395h2v2h-2zM663 402h2v2h-2zM663 408h2v2h-2zM663 415h2v2h-2zM664 421h2v2h-2zM664 428h2v2h-2zM664 434h2v2h-2zM664 441h2v2h-2zM664 447h2v2h-2zM665 454h2v2h-2zM665 460h2v2h-2zM665 467h2v2h-2zM665 473h2v2h-2zM665 480h2v2h-2zM666 486h2v2h-2zM666 493h2v2h-2zM666 499h2v2h-2zM666 506h2v2h-2zM666 512h2v2h-2zM667 519h2v2h-2zM667 525h2v2h-2zM667 532h2v2h-2zM667 538h2v2h-2zM667 545h2v2h-2zM667 551h2v2h-2zM668 558h2v2h-2zM668 564h2v2h-2zM668 571h2v2h-2zM668 577h2v2h-2zM668 584h2v2h-2zM668 590h2v2h-2zM669 597h2v2h-2zM669 603h2v2h-2zM669 610h2v2h-2zM669 616h2v2h-2zM669 623h2v2h-2zM670 629h2v2h-2zM670 636h2v2h-2zM670 640h2v2h-2zM670 642h2v2h-2zM671 644h2v2h-2zM671 645h2v2h-2zM671 647h2v2h-2zM671 649h2v2h-2zM672 651h2v2h-2zM672 652h2v2h-2zM672 654h2v2h-2zM672 656h2v2h-2zM673 658h2v2h-2zM673 659h2v2h-2zM674 661h2v2h-2zM674 663h2v2h-2zM675 664h2v2h-2zM676 666h2v2h-2zM677 668h2v2h-2zM678 669h2v2h-2zM679 671h2v2h-2zM679 672h2v2h-2zM680 674h2v2h-2zM681 676h2v2h-2zM681 678h2v2h-2zM682 679h2v2h-2zM682 681h2v2h-2zM683 683h2v2h-2zM683 684h2v2h-2zM684 686h2v2h-2zM766 655h2v2h-2zM766 643h2v2h-2zM767 631h2v2h-2zM767 619h2v2h-2zM767 607h2v2h-2zM767 595h2v2h-2zM768 583h2v2h-2zM768 571h2v2h-2zM768 559h2v2h-2zM768 547h2v2h-2zM768 535h2v2h-2zM768 523h2v2h-2zM769 511h2v2h-2zM769 499h2v2h-2zM769 487h2v2h-2zM769 475h2v2h-2zM769 463h2v2h-2zM769 451h2v2h-2zM770 434h2v2h-2zM770 417h2v2h-2zM770 403h2v2h-2zM770 389h2v2h-2zM770 377h2v2h-2zM771 367h2v2h-2zM772 335h2v2h-2zM774 337h2v2h-2zM772 339h2v2h-2zM774 342h2v2h-2zM772 345h2v2h-2zM777 367h2v2h-2zM777 368h2v2h-2zM777 370h2v2h-2zM777 371h2v2h-2zM777 372h2v2h-2zM777 374h2v2h-2zM777 375h2v2h-2zM777 376h2v2h-2zM777 377h2v2h-2zM778 378h2v2h-2zM778 379h2v2h-2zM778 380h2v2h-2zM778 382h2v2h-2zM778 383h2v2h-2zM778 384h2v2h-2zM778 385h2v2h-2zM779 386h2v2h-2zM779 390h2v2h-2zM779 394h2v2h-2zM779 400h2v2h-2zM780 407h2v2h-2zM780 413h2v2h-2zM780 418h2v2h-2zM780 421h2v2h-2zM781 425h2v2h-2zM781 431h2v2h-2zM781 439h2v2h-2zM771 351h2v2h-2zM772 351h2v2h-2zM773 351h2v2h-2zM775 351h2v2h-2zM776 351h2v2h-2zM776 351h2v2h-2zM776 352h2v2h-2zM776 354h2v2h-2zM776 355h2v2h-2zM776 356h2v2h-2zM776 358h2v2h-2zM776 359h2v2h-2zM776 360h2v2h-2zM776 361h2v2h-2zM776 363h2v2h-2zM771 354h2v2h-2zM772 357h2v2h-2zM774 357h2v2h-2zM771 360h2v2h-2zM774 362h2v2h-2zM776 364h2v2h-2zM775 364h2v2h-2zM781 439h2v2h-2zM781 450h2v2h-2zM781 461h2v2h-2zM782 472h2v2h-2zM782 483h2v2h-2zM782 494h2v2h-2zM782 505h2v2h-2zM782 516h2v2h-2zM782 527h2v2h-2zM783 538h2v2h-2zM783 549h2v2h-2zM783 560h2v2h-2zM783 571h2v2h-2zM783 582h2v2h-2zM784 593h2v2h-2zM784 604h2v2h-2zM784 615h2v2h-2zM784 626h2v2h-2zM784 637h2v2h-2zM785 648h2v2h-2zM785 659h2v2h-2zM785 670h2v2h-2zM786 681h2v2h-2zM794 667h2v2h-2zM794 668h2v2h-2zM795 670h2v2h-2zM795 671h2v2h-2zM795 673h2v2h-2zM796 674h2v2h-2zM796 676h2v2h-2zM796 677h2v2h-2zM797 679h2v2h-2zM797 680h2v2h-2zM797 682h2v2h-2zM798 683h2v2h-2zM840 649h2v2h-2zM841 648h2v2h-2zM841 648h2v2h-2zM841 649h2v2h-2zM842 651h2v2h-2zM842 652h2v2h-2zM842 654h2v2h-2zM842 655h2v2h-2zM842 657h2v2h-2zM842 658h2v2h-2zM842 659h2v2h-2zM842 661h2v2h-2zM842 664h2v2h-2zM843 666h2v2h-2zM843 669h2v2h-2zM843 671h2v2h-2zM843 674h2v2h-2zM844 676h2v2h-2zM844 679h2v2h-2zM844 681h2v2h-2zM844 684h2v2h-2zM845 686h2v2h-2zM845 689h2v2h-2z"/>
</svg>

<!-- configure button -->
<div class="a" style="left:25px;top:923px;width:1115px;height:21px;background:#e1e1e1;border:1px solid #adadad"></div>
<div class="t" style="left:521px;top:927px">Configure Visualization</div>

<!-- ============ RIGHT DOCKS ============ -->
<!-- Variables title -->
<div class="a" style="left:1167px;top:2px;width:500px;height:20px;background:#dadada;border:1px solid #c0c0c0"></div>
<div class="t" style="left:1172px;top:5px">Variables</div>
<!-- float/close icons -->
<svg class="a" style="left:1626px;top:7px" width="34" height="12" viewBox="0 0 34 12">
<g fill="#262626"><rect x="3" y="1" width="6" height="1.5"/><rect x="8" y="1" width="1" height="5.5"/><rect x="3" y="1" width="1" height="3"/><rect x="7" y="5.5" width="2" height="1"/>
<rect x="1" y="4" width="6" height="1.5"/><rect x="1" y="4" width="1" height="6"/><rect x="6" y="4" width="1" height="6"/><rect x="1" y="9" width="6" height="1"/></g>
<path d="M22.6,2.6L29.4,9.4M29.4,2.6L22.6,9.4" stroke="#333" stroke-width="1.8"/>
</svg>
<!-- Variables tree -->
<div class="a" style="left:1167px;top:24px;width:500px;height:316px;background:#fff;border:1px solid #828790"></div>
<div class="a" style="left:1267px;top:25px;width:1px;height:23px;background:#e5e5e5"></div>
<div class="t" style="left:1172px;top:30px">Name</div>
<div class="t" style="left:1272px;top:30px">Value</div>
<div class="t" style="left:1191px;top:57px">Time</div>
<div class="a" style="left:1268px;top:52px;width:400px;height:21px;background:#fff;border:1px solid #7a7a7a"></div>
<div class="t" style="left:1271px;top:56px">nullptr</div>

<!-- Properties title -->
<div class="a" style="left:1167px;top:345px;width:500px;height:20px;background:#dadada;border:1px solid #c0c0c0"></div>
<div class="t" style="left:1172px;top:349px">Properties</div>
<svg class="a" style="left:1626px;top:350px" width="34" height="12" viewBox="0 0 34 12">
<g fill="#262626"><rect x="3" y="1" width="6" height="1.5"/><rect x="8" y="1" width="1" height="5.5"/><rect x="3" y="1" width="1" height="3"/><rect x="7" y="5.5" width="2" height="1"/>
<rect x="1" y="4" width="6" height="1.5"/><rect x="1" y="4" width="1" height="6"/><rect x="6" y="4" width="1" height="6"/><rect x="1" y="9" width="6" height="1"/></g>
<path d="M22.6,2.6L29.4,9.4M29.4,2.6L22.6,9.4" stroke="#333" stroke-width="1.8"/>
</svg>
<!-- Properties tree -->
<div class="a" style="left:1167px;top:367px;width:500px;height:459px;background:#fff;border:1px solid #828790"></div>

<div class="a" style="left:1258px;top:368px;width:1px;height:23px;background:#e5e5e5"></div>
<div class="t" style="left:1172px;top:373px">Name</div>
<div class="t" style="left:1263px;top:373px">Value</div>
<div class="a" style="left:1645px;top:368px;width:1px;height:23px;background:#e5e5e5"></div>
<!-- scrollbar -->
<div class="a" style="left:1647px;top:368px;width:13px;height:457px;background:#f0f0f0"></div>
<div class="a" style="left:1647px;top:385px;width:13px;height:104px;background:#cdcdcd"></div>
<svg class="a" style="left:1647px;top:368px" width="13" height="457" viewBox="0 0 13 457">
<path d="M4.3,11.3L7.5,6.9L10.7,11.3" fill="none" stroke="#454545" stroke-width="2"/>
<path d="M4.3,446.3L7.5,450.8L10.7,446.3" fill="none" stroke="#454545" stroke-width="2"/>
</svg>
<!-- Preset row -->
<svg class="a" style="left:1173px;top:400px" width="10" height="13" viewBox="0 0 10 13">
<path d="M2.5,2.5L6.5,6.5L2.5,10.5" fill="none" stroke="#a0a0a0" stroke-width="1.8"/>
</svg>
<div class="t" style="left:1192px;top:400px">Preset</div>
<div class="a" style="left:1259px;top:395px;width:387px;height:21px;background:#e1e1e1;border:1px solid #adadad"></div>
<div class="t" style="left:1264px;top:399px">Left Velocity</div>
<svg class="a" style="left:1630px;top:400px" width="14" height="10" viewBox="0 0 14 10">
<path d="M3,3.5L7,7.5L11,3.5" fill="none" stroke="#404040" stroke-width="1"/>
</svg>
<!-- Background row -->
<div class="a" style="left:1188px;top:421px;width:458px;height:30px;background:#f5f5f5"></div>
<div class="t" style="left:1192px;top:430px">Background</div>
<div class="a" style="left:1259px;top:425px;width:342px;height:21px;background:#fff;border:1px solid #7a7a7a"></div>
<div class="a" style="left:1602px;top:425px;width:43px;height:21px;background:#e1e1e1;border:1px solid #adadad"></div>
<div class="t" style="left:1618px;top:429px">...</div>
<!-- Axes row -->
<svg class="a" style="left:1510px;top:462px" width="130" height="22" viewBox="0 0 130 22">
<g fill="#62d11f"><rect x="8" y="2.4" width="12.2" height="2.6"/><rect x="8" y="7.3" width="12.2" height="2.6"/><rect x="8" y="12.2" width="12.2" height="2.6"/><rect x="8" y="17" width="12.2" height="2.6"/>
<rect x="22.3" y="9.4" width="9.8" height="2.7"/><rect x="25.8" y="5.9" width="2.6" height="10.2"/></g>
<path d="M43.2,3.1L59.4,19.1M59.4,3.1L43.2,19.1" stroke="#dd1c1c" stroke-width="3.1"/>
<path d="M81.8,4.5V18.5M76.5,13.5L81.8,18.8L87.1,13.5" fill="none" stroke="#000" stroke-width="2.5" stroke-linecap="round" stroke-linejoin="round"/>
<path d="M113.2,17.3V3.5M108,8.5L113.2,3.2L118.4,8.5" fill="none" stroke="#000" stroke-width="2.5" stroke-linecap="round" stroke-linejoin="round"/>
</svg>
<div class="t" style="left:1191px;top:565px">Axises</div>
<div class="a" style="left:1264px;top:495px;width:377px;height:192px;background:#fff;border:1px solid #828790"></div>
<div class="t" style="left:1438px;top:501px">Value</div>
<!-- Series row -->
<div class="a" style="left:1188px;top:692px;width:458px;height:133px;background:#f5f5f5"></div>
<svg class="a" style="left:1510px;top:703px" width="130" height="22" viewBox="0 0 130 22">
<g fill="#62d11f"><rect x="8" y="2.4" width="12.2" height="2.6"/><rect x="8" y="7.3" width="12.2" height="2.6"/><rect x="8" y="12.2" width="12.2" height="2.6"/><rect x="8" y="17" width="12.2" height="2.6"/>
<rect x="22.3" y="9.4" width="9.8" height="2.7"/><rect x="25.8" y="5.9" width="2.6" height="10.2"/></g>
<path d="M43.2,3.1L59.4,19.1M59.4,3.1L43.2,19.1" stroke="#dd1c1c" stroke-width="3.1"/>
<path d="M81.8,4.5V18.5M76.5,13.5L81.8,18.8L87.1,13.5" fill="none" stroke="#000" stroke-width="2.5" stroke-linecap="round" stroke-linejoin="round"/>
<path d="M113.2,17.3V3.5M108,8.5L113.2,3.2L118.4,8.5" fill="none" stroke="#000" stroke-width="2.5" stroke-linecap="round" stroke-linejoin="round"/>
</svg>
<div class="t" style="left:1191px;top:806px">Series</div>
<div class="a" style="left:1264px;top:736px;width:377px;height:89px;background:#fff;border:1px solid #828790;border-bottom:none"></div>
<div class="t" style="left:1438px;top:742px">Value</div>
<div class="t" style="left:1268px;top:768px">Fixations</div>
<div class="a" style="left:1265px;top:789px;width:375px;height:1px;background:#d8d8d8"></div>
<div class="t" style="left:1268px;top:798px">Saccades</div>
<div class="a" style="left:1265px;top:819px;width:375px;height:1px;background:#d8d8d8"></div>


<!-- bottom panel -->
<div class="a" style="left:1167px;top:831px;width:500px;height:140px;background:#fff;border:1px solid #808080"></div>
</body></html>
